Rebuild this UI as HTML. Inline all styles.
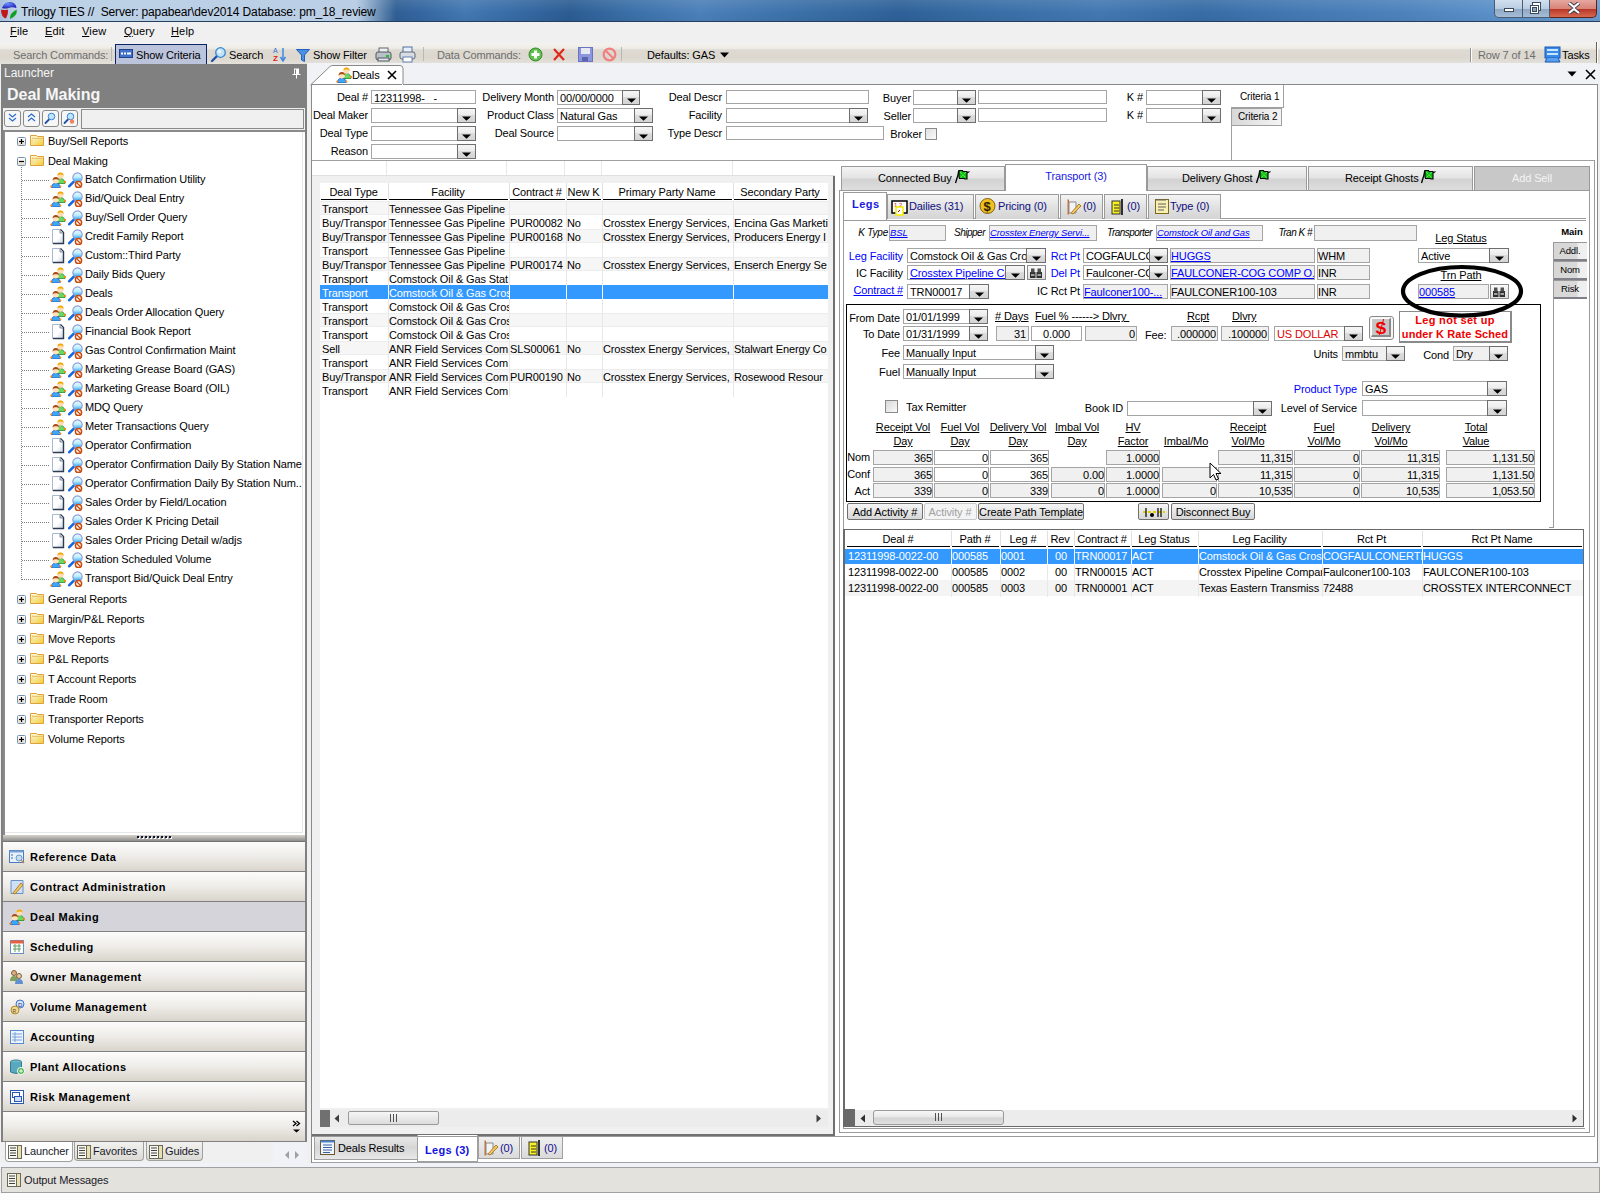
<!DOCTYPE html><html><head><meta charset="utf-8"><style>
html,body{margin:0;padding:0;}
body{width:1600px;height:1200px;overflow:hidden;position:relative;background:#f0f0f0;font-family:"Liberation Sans",sans-serif;font-size:11px;color:#000;}
body>div,body>svg{position:absolute;white-space:pre;}
</style></head><body>
<div style="left:0px;top:0px;width:1600px;height:21px;background:linear-gradient(90deg,#3a6ca2 0.00%,#2c5b8e 23.75%,#3466a0 26.25%,#4378b1 29.06%,#386ca6 31.88%,#2b5c93 35.62%,#3a6fa7 39.38%,#4b80b9 43.75%,#3c71a9 49.38%,#2e6198 56.25%,#396fa7 62.50%,#4278b1 68.75%,#376ca5 75.00%,#4379b3 81.25%,#4c82bb 87.50%,#5a90c8 93.12%,#6a9bd0 100.00%);"></div>
<div style="left:0px;top:0px;width:1600px;height:21px;background:linear-gradient(rgba(255,255,255,0.10),rgba(255,255,255,0.0) 60%,rgba(0,0,0,0.04));"></div>
<div style="left:0px;top:0px;width:396px;height:21px;background:linear-gradient(90deg,#a9c1dd 0%,#bdd1e7 4%,#bacee5 90%,rgba(186,206,229,0) 100%);"></div>
<div style="left:0px;top:21px;width:1600px;height:1px;background:#25405e;"></div>
<svg style="left:0px;top:1px;" width="18" height="19" viewBox="0 0 18 19"><defs><radialGradient id="lgb" cx="0.4" cy="0.3" r="0.7"><stop offset="0" stop-color="#6a8cff"/><stop offset="1" stop-color="#2020b0"/></radialGradient></defs>
<path d="M2 7 Q4 1 10 1 Q16 1.5 16.5 7 Q12 5.5 8.5 7 Q5 8 2 7Z" fill="url(#lgb)"/>
<path d="M1 8.5 Q5 9.5 8 8.5 Q8.5 13 6 17.5 Q1 16 1 8.5Z" fill="#c01818"/>
<path d="M16.8 8.5 Q17.5 15 10 18 Q9.5 12 16.8 8.5Z" fill="#10a020"/></svg>
<div style="top:3.84px;font-size:12px;line-height:16px;left:21px;color:#000;letter-spacing:-0.14px;">Trilogy TIES //  Server: papabear\dev2014 Database: pm_18_review</div>
<div style="left:1494px;top:0px;width:29px;height:18px;background:linear-gradient(#d2e0ee,#b9cde2 50%,#8fa8c4 55%,#a6bdd6);border:1px solid #4a5c72;border-top:none;border-radius:0 0 0 5px;box-sizing:border-box;"></div>
<div style="left:1523px;top:0px;width:27px;height:18px;background:linear-gradient(#d2e0ee,#b9cde2 50%,#8fa8c4 55%,#a6bdd6);border:1px solid #4a5c72;border-top:none;border-left:none;box-sizing:border-box;"></div>
<div style="left:1550px;top:0px;width:47px;height:18px;background:linear-gradient(#e6a8a0,#d88478 50%,#b83828 55%,#d86a50);border:1px solid #5a2418;border-top:none;border-left:none;border-radius:0 0 5px 0;box-sizing:border-box;"></div>
<div style="left:1504px;top:8px;width:10px;height:4px;background:#fff;border:1px solid #3a4a5a;box-sizing:border-box;"></div>
<svg style="left:1529px;top:1px;" width="13" height="14" viewBox="0 0 13 14"><rect x="3.5" y="1.5" width="8" height="8" fill="#fff" stroke="#3a4a5a"/><rect x="1.5" y="4.5" width="8" height="8" fill="#fff" stroke="#3a4a5a"/><rect x="3.5" y="6.5" width="4" height="4" fill="#8ea4bc" stroke="#3a4a5a"/></svg>
<svg style="left:1567px;top:2px;" width="14" height="12" viewBox="0 0 14 12"><path d="M2 1 L7 5 L12 1 M2 11 L7 7 L12 11" stroke="#3a3a4a" stroke-width="4" fill="none"/><path d="M2 1 L7 5 L12 1 M2 11 L7 7 L12 11" stroke="#fff" stroke-width="2.2" fill="none"/></svg>
<div style="left:0px;top:22px;width:1600px;height:21px;background:#f0f0f0;"></div>
<div style="left:10px;top:24.189999999999998px;font-size:11px;line-height:14px;letter-spacing:0.15px;"><u>F</u>ile</div>
<div style="left:45px;top:24.189999999999998px;font-size:11px;line-height:14px;letter-spacing:0.15px;"><u>E</u>dit</div>
<div style="left:82px;top:24.189999999999998px;font-size:11px;line-height:14px;letter-spacing:0.15px;"><u>V</u>iew</div>
<div style="left:124px;top:24.189999999999998px;font-size:11px;line-height:14px;letter-spacing:0.15px;"><u>Q</u>uery</div>
<div style="left:171px;top:24.189999999999998px;font-size:11px;line-height:14px;letter-spacing:0.15px;"><u>H</u>elp</div>
<div style="left:0px;top:43px;width:1600px;height:21px;background:linear-gradient(#f4f3ef 0%,#eeece7 25%,#dedad2 33%,#dcd8d0 70%,#e4e1db 100%);"></div>
<div style="top:48.19px;font-size:11px;line-height:14px;left:13px;color:#6d6d6d;letter-spacing:-0.12px;">Search Commands:</div>
<div style="left:111px;top:47px;width:1px;height:14px;background:#b8b8b8;"></div>
<div style="left:115px;top:44px;width:92px;height:20px;background:#bcc4dc;border:1px solid #0a246a;border-bottom:none;box-sizing:border-box;"></div>
<svg style="left:119px;top:49px;" width="14" height="9" viewBox="0 0 14 9"><rect x="0.5" y="0.5" width="13" height="8" fill="#4070c8" stroke="#204090"/><rect x="2" y="3.5" width="10" height="2" fill="#fff"/><rect x="4" y="3" width="1" height="3" fill="#4070c8"/><rect x="7" y="3" width="1" height="3" fill="#4070c8"/></svg>
<div style="top:48.19px;font-size:11px;line-height:14px;left:136px;letter-spacing:-0.12px;">Show Criteria</div>
<svg style="left:210px;top:46px;" width="17" height="17" viewBox="0 0 17 17"><line x1="2" y1="15" x2="7" y2="10" stroke="#2050a8" stroke-width="2.4" stroke-linecap="round"/><circle cx="10.5" cy="6.5" r="4.8" fill="#bfe3fb" stroke="#3a86d0" stroke-width="1.3"/><circle cx="9.5" cy="5.5" r="1.8" fill="#fff" opacity="0.7"/></svg>
<div style="top:48.19px;font-size:11px;line-height:14px;left:229px;letter-spacing:-0.12px;">Search</div>
<svg style="left:273px;top:46px;" width="13" height="16" viewBox="0 0 13 16"><text x="0" y="7" font-size="7" fill="#3070d0" font-family="Liberation Sans">A</text><text x="0" y="15" font-size="8" fill="#e02020" font-weight="bold" font-family="Liberation Sans">Z</text><line x1="10" y1="2" x2="10" y2="14" stroke="#3a8ae0" stroke-width="1.5"/><path d="M7.5 11 L10 15 L12.5 11" fill="none" stroke="#3a8ae0" stroke-width="1.5"/></svg>
<svg style="left:296px;top:49px;" width="14" height="13" viewBox="0 0 14 13"><path d="M0.5 0.5 H13.5 L8.5 6 V12.5 L5.5 11 V6 Z" fill="#4a90e0" stroke="#2060c0"/></svg>
<div style="top:48.19px;font-size:11px;line-height:14px;left:313px;letter-spacing:-0.12px;">Show Filter</div>
<svg style="left:375px;top:47px;" width="17" height="15" viewBox="0 0 17 15"><rect x="4" y="1" width="9" height="5" fill="#f0f0f0" stroke="#606870"/><rect x="1" y="5" width="15" height="8" rx="2" fill="#b8c0c8" stroke="#505860"/><rect x="3" y="11" width="11" height="3" fill="#e0e4e8" stroke="#505860"/><rect x="11" y="8" width="3" height="2" fill="#20c020"/></svg>
<svg style="left:399px;top:46px;" width="17" height="17" viewBox="0 0 17 17"><rect x="4" y="1" width="9" height="6" fill="#e8f0ff" stroke="#5070a0"/><rect x="1" y="6" width="15" height="7" rx="2" fill="#d8dce4" stroke="#606870"/><rect x="4" y="11" width="9" height="5" fill="#fff" stroke="#6080b0"/></svg>
<div style="left:423px;top:47px;width:1px;height:14px;background:#b8b8b8;"></div>
<div style="top:48.19px;font-size:11px;line-height:14px;left:437px;color:#6d6d6d;letter-spacing:-0.12px;">Data Commands:</div>
<svg style="left:528px;top:47px;" width="15" height="15" viewBox="0 0 15 15"><circle cx="7.5" cy="7.5" r="6.5" fill="#5cc04a" stroke="#3a8a30"/><rect x="6" y="3.5" width="3" height="8" fill="#fff"/><rect x="3.5" y="6" width="8" height="3" fill="#fff"/></svg>
<svg style="left:552px;top:47px;" width="14" height="15" viewBox="0 0 14 15"><path d="M2 2 L12 13 M12 2 L2 13" stroke="#e02818" stroke-width="2.2"/></svg>
<svg style="left:578px;top:47px;" width="15" height="15" viewBox="0 0 15 15"><rect x="0.5" y="0.5" width="14" height="14" fill="#8c96e0" stroke="#6a74c0"/><rect x="3" y="1" width="9" height="6" fill="#e8e8f0"/><rect x="4" y="10" width="6" height="4" fill="#5a64a8"/></svg>
<svg style="left:602px;top:47px;" width="15" height="15" viewBox="0 0 15 15"><circle cx="7.5" cy="7.5" r="5.8" fill="none" stroke="#f08080" stroke-width="2.2"/><line x1="3.5" y1="3.5" x2="11.5" y2="11.5" stroke="#f08080" stroke-width="2.2"/></svg>
<div style="left:621px;top:47px;width:1px;height:14px;background:#b8b8b8;"></div>
<div style="top:48.19px;font-size:11px;line-height:14px;left:647px;letter-spacing:-0.12px;">Defaults: GAS</div>
<svg style="left:720px;top:52px;" width="9" height="6" viewBox="0 0 9 6"><path d="M0 0.5 H9 L4.5 5.5 Z" fill="#000"/></svg>
<div style="left:1470px;top:48px;width:2px;height:14px;background:linear-gradient(90deg,#909090 50%,#fff 50%);"></div>
<div style="top:48.19px;font-size:11px;line-height:14px;left:1478px;color:#6d6d6d;letter-spacing:-0.12px;">Row 7 of 14</div>
<svg style="left:1544px;top:46px;" width="17" height="17" viewBox="0 0 17 17"><rect x="1" y="1" width="15" height="11" fill="#3a8ae8" stroke="#1a5ab8"/><rect x="3" y="3" width="11" height="2" fill="#c8e4ff"/><rect x="3" y="7" width="11" height="2" fill="#c8e4ff"/><path d="M3 12 L1 16 H16 L14 12" fill="#5aa0f0" stroke="#1a5ab8"/></svg>
<div style="top:48.19px;font-size:11px;line-height:14px;left:1562px;letter-spacing:-0.12px;">Tasks</div>
<div style="left:1596px;top:42px;width:2px;height:21px;background:linear-gradient(90deg,#606060 50%,#fff 50%);"></div>
<div style="left:1px;top:64px;width:306px;height:1078px;background:#808080;"></div>
<div style="top:64.84px;font-size:12px;line-height:16px;left:4px;color:#f4f4f4;">Launcher</div>
<svg style="left:292px;top:68px;" width="9" height="11" viewBox="0 0 9 11"><path d="M2 0.5 H7 V6 H8.5 V7 H5 V10.5 H4 V7 H0.5 V6 H2 Z" fill="#fff"/><rect x="3" y="1.5" width="1" height="4.5" fill="#808080"/></svg>
<div style="top:83.95px;font-size:16px;line-height:21px;left:7px;color:#f6f6f6;font-weight:bold;">Deal Making</div>
<div style="left:3px;top:108px;width:302px;height:22px;background:#f0f0f0;"></div>
<div style="left:4px;top:110px;width:17px;height:17px;background:#f6f6f6;border:1px solid #8a8a8a;border-radius:3px;box-sizing:border-box;"></div>
<svg style="left:8px;top:113px;" width="9" height="10" viewBox="0 0 9 10"><path d="M1 1 L4.5 4 L8 1 M1 5 L4.5 8 L8 5" stroke="#2a6ad0" stroke-width="1.2" fill="none"/></svg>
<div style="left:23px;top:110px;width:17px;height:17px;background:#f6f6f6;border:1px solid #8a8a8a;border-radius:3px;box-sizing:border-box;"></div>
<svg style="left:27px;top:113px;" width="9" height="10" viewBox="0 0 9 10"><path d="M1 8 L4.5 5 L8 8 M1 4 L4.5 1 L8 4" stroke="#2a6ad0" stroke-width="1.2" fill="none"/></svg>
<div style="left:42px;top:110px;width:17px;height:17px;background:#f6f6f6;border:1px solid #8a8a8a;border-radius:3px;box-sizing:border-box;"></div>
<svg style="left:44px;top:112px;" width="12" height="13" viewBox="0 0 12 13"><line x1="1.5" y1="11" x2="5" y2="7.5" stroke="#2050a8" stroke-width="1.8" stroke-linecap="round"/><circle cx="7.5" cy="4.5" r="3.3" fill="#bfe3fb" stroke="#3a86d0"/></svg>
<div style="left:61px;top:110px;width:17px;height:17px;background:#f6f6f6;border:1px solid #8a8a8a;border-radius:3px;box-sizing:border-box;"></div>
<svg style="left:63px;top:112px;" width="12" height="13" viewBox="0 0 12 13"><line x1="1.5" y1="11" x2="5" y2="7.5" stroke="#2050a8" stroke-width="1.8" stroke-linecap="round"/><circle cx="7.5" cy="4.5" r="3.3" fill="#bfe3fb" stroke="#3a86d0"/><circle cx="9" cy="9.5" r="2.2" fill="#f08060"/></svg>
<div style="left:81px;top:109px;width:223px;height:20px;background:#f0f0f0;border:1px solid #8a8a8a;border-left-width:1px;box-sizing:border-box;"></div>
<div style="left:3px;top:130px;width:302px;height:705px;background:#fff;border:2px solid #8a8a8a;border-right:none;border-bottom:none;box-sizing:border-box;"></div>
<div style="left:302px;top:132px;width:1px;height:701px;background:#e6e6e6;"></div>
<div style="left:5px;top:832px;width:298px;height:1px;background:#e6e6e6;"></div>
<svg style="left:17px;top:137px;" width="9" height="9" viewBox="0 0 9 9"><defs><linearGradient id="eg" x1="0" y1="0" x2="0" y2="1"><stop offset="0" stop-color="#ffffff"/><stop offset="1" stop-color="#e4dcc8"/></linearGradient></defs><rect x="0.5" y="0.5" width="8" height="8" rx="1" fill="url(#eg)" stroke="#7890b0"/><line x1="2" y1="4.5" x2="7" y2="4.5" stroke="#000" stroke-width="1.2"/><line x1="4.5" y1="2" x2="4.5" y2="7" stroke="#000" stroke-width="1.2"/></svg>
<svg style="left:30px;top:135px;" width="16" height="13" viewBox="0 0 16 13">
<defs><linearGradient id="fg" x1="0" y1="0" x2="1" y2="1"><stop offset="0" stop-color="#fffbe8"/><stop offset="1" stop-color="#f0cc30"/></linearGradient></defs>
<path d="M0.5 0.5 H6.5 L7.5 1.5 H13.5 V10.5 H0.5 Z" fill="url(#fg)" stroke="#e0a040" stroke-width="1"/>
<path d="M2 3.5 H12.5" stroke="#e8c070" stroke-width="0.9"/>
<path d="M2 3 L3 2 M2 4.5 V8" stroke="#f0d080" stroke-width="0.8"/>
</svg>
<div style="top:134.19px;font-size:11px;line-height:14px;left:48px;letter-spacing:-0.12px;">Buy/Sell Reports</div>
<svg style="left:17px;top:157px;" width="9" height="9" viewBox="0 0 9 9"><defs><linearGradient id="eg" x1="0" y1="0" x2="0" y2="1"><stop offset="0" stop-color="#ffffff"/><stop offset="1" stop-color="#e4dcc8"/></linearGradient></defs><rect x="0.5" y="0.5" width="8" height="8" rx="1" fill="url(#eg)" stroke="#7890b0"/><line x1="2" y1="4.5" x2="7" y2="4.5" stroke="#000" stroke-width="1.2"/></svg>
<svg style="left:30px;top:155px;" width="16" height="13" viewBox="0 0 16 13">
<defs><linearGradient id="fg" x1="0" y1="0" x2="1" y2="1"><stop offset="0" stop-color="#fffbe8"/><stop offset="1" stop-color="#f0cc30"/></linearGradient></defs>
<path d="M0.5 0.5 H6.5 L7.5 1.5 H13.5 V10.5 H0.5 Z" fill="url(#fg)" stroke="#e0a040" stroke-width="1"/>
<path d="M2 3.5 H12.5" stroke="#e8c070" stroke-width="0.9"/>
<path d="M2 3 L3 2 M2 4.5 V8" stroke="#f0d080" stroke-width="0.8"/>
</svg>
<div style="top:154.19px;font-size:11px;line-height:14px;left:48px;letter-spacing:-0.12px;">Deal Making</div>
<div style="left:21px;top:167px;width:1px;height:413px;background:repeating-linear-gradient(#808080 0 1px,transparent 1px 2px);"></div>
<div style="left:22px;top:180px;width:28px;height:1px;background:repeating-linear-gradient(90deg,#808080 0 1px,transparent 1px 2px);"></div>
<svg style="left:50px;top:172px;" width="16" height="16" viewBox="0 0 16 16">
<path d="M7 11.5 Q7 6.5 10.5 6.5 Q14.5 6.5 15 11.5 Z" fill="#6ad860" stroke="#2a8a2a" stroke-width="0.8"/>
<circle cx="15.2" cy="9.8" r="1.1" fill="#ff8a20"/>
<circle cx="10.5" cy="3.6" r="3.1" fill="#ffdcb4"/>
<path d="M7.4 3.8 Q7.4 0.4 10.5 0.4 Q13.6 0.4 13.6 3.8 Q12 2.2 10.5 2.6 Q9 2.2 7.4 3.8Z" fill="#f2a800"/>
<path d="M1.5 16 Q1.5 11.2 5.8 11.2 Q10.2 11.2 10.2 16 Z" fill="#3aa8f8" stroke="#1a50c0" stroke-width="0.8"/>
<circle cx="1.2" cy="14.6" r="1.1" fill="#ff8a20"/><circle cx="10.3" cy="14.6" r="1.1" fill="#ff8a20"/>
<circle cx="5.8" cy="8.3" r="3.2" fill="#ffe2bc"/>
<path d="M2.6 8.6 Q2.6 5 5.8 5 Q9 5 9 8.6 Q7.5 6.8 5.8 7.3 Q4 6.8 2.6 8.6Z" fill="#a64a18"/>
</svg>
<svg style="left:67px;top:171px;" width="17" height="17" viewBox="0 0 17 17">
<defs><linearGradient id="lg" x1="0" y1="0" x2="0" y2="1"><stop offset="0" stop-color="#e8fbff"/><stop offset="0.45" stop-color="#bfefff"/><stop offset="1" stop-color="#1a98f8"/></linearGradient></defs>
<line x1="2.3" y1="15.2" x2="6.8" y2="10.6" stroke="#1468e0" stroke-width="2.6" stroke-linecap="round"/>
<circle cx="10.5" cy="6.6" r="4.7" fill="url(#lg)" stroke="#8c9ad8" stroke-width="1.1"/>
<circle cx="11.5" cy="13.5" r="3.1" fill="#fff" stroke="#c84a0a" stroke-width="1.5"/>
<line x1="9.5" y1="11.5" x2="13.5" y2="15.5" stroke="#c84a0a" stroke-width="1.2"/>
</svg>
<div style="top:172.19px;font-size:11px;line-height:14px;left:85px;letter-spacing:-0.12px;width:217px;overflow:hidden;">Batch Confirmation Utility</div>
<div style="left:22px;top:199px;width:28px;height:1px;background:repeating-linear-gradient(90deg,#808080 0 1px,transparent 1px 2px);"></div>
<svg style="left:50px;top:191px;" width="16" height="16" viewBox="0 0 16 16">
<path d="M7 11.5 Q7 6.5 10.5 6.5 Q14.5 6.5 15 11.5 Z" fill="#6ad860" stroke="#2a8a2a" stroke-width="0.8"/>
<circle cx="15.2" cy="9.8" r="1.1" fill="#ff8a20"/>
<circle cx="10.5" cy="3.6" r="3.1" fill="#ffdcb4"/>
<path d="M7.4 3.8 Q7.4 0.4 10.5 0.4 Q13.6 0.4 13.6 3.8 Q12 2.2 10.5 2.6 Q9 2.2 7.4 3.8Z" fill="#f2a800"/>
<path d="M1.5 16 Q1.5 11.2 5.8 11.2 Q10.2 11.2 10.2 16 Z" fill="#3aa8f8" stroke="#1a50c0" stroke-width="0.8"/>
<circle cx="1.2" cy="14.6" r="1.1" fill="#ff8a20"/><circle cx="10.3" cy="14.6" r="1.1" fill="#ff8a20"/>
<circle cx="5.8" cy="8.3" r="3.2" fill="#ffe2bc"/>
<path d="M2.6 8.6 Q2.6 5 5.8 5 Q9 5 9 8.6 Q7.5 6.8 5.8 7.3 Q4 6.8 2.6 8.6Z" fill="#a64a18"/>
</svg>
<svg style="left:67px;top:190px;" width="17" height="17" viewBox="0 0 17 17">
<defs><linearGradient id="lg" x1="0" y1="0" x2="0" y2="1"><stop offset="0" stop-color="#e8fbff"/><stop offset="0.45" stop-color="#bfefff"/><stop offset="1" stop-color="#1a98f8"/></linearGradient></defs>
<line x1="2.3" y1="15.2" x2="6.8" y2="10.6" stroke="#1468e0" stroke-width="2.6" stroke-linecap="round"/>
<circle cx="10.5" cy="6.6" r="4.7" fill="url(#lg)" stroke="#8c9ad8" stroke-width="1.1"/>
<circle cx="11.5" cy="13.5" r="3.1" fill="#fff" stroke="#c84a0a" stroke-width="1.5"/>
<line x1="9.5" y1="11.5" x2="13.5" y2="15.5" stroke="#c84a0a" stroke-width="1.2"/>
</svg>
<div style="top:191.19px;font-size:11px;line-height:14px;left:85px;letter-spacing:-0.12px;width:217px;overflow:hidden;">Bid/Quick Deal Entry</div>
<div style="left:22px;top:218px;width:28px;height:1px;background:repeating-linear-gradient(90deg,#808080 0 1px,transparent 1px 2px);"></div>
<svg style="left:50px;top:210px;" width="16" height="16" viewBox="0 0 16 16">
<path d="M7 11.5 Q7 6.5 10.5 6.5 Q14.5 6.5 15 11.5 Z" fill="#6ad860" stroke="#2a8a2a" stroke-width="0.8"/>
<circle cx="15.2" cy="9.8" r="1.1" fill="#ff8a20"/>
<circle cx="10.5" cy="3.6" r="3.1" fill="#ffdcb4"/>
<path d="M7.4 3.8 Q7.4 0.4 10.5 0.4 Q13.6 0.4 13.6 3.8 Q12 2.2 10.5 2.6 Q9 2.2 7.4 3.8Z" fill="#f2a800"/>
<path d="M1.5 16 Q1.5 11.2 5.8 11.2 Q10.2 11.2 10.2 16 Z" fill="#3aa8f8" stroke="#1a50c0" stroke-width="0.8"/>
<circle cx="1.2" cy="14.6" r="1.1" fill="#ff8a20"/><circle cx="10.3" cy="14.6" r="1.1" fill="#ff8a20"/>
<circle cx="5.8" cy="8.3" r="3.2" fill="#ffe2bc"/>
<path d="M2.6 8.6 Q2.6 5 5.8 5 Q9 5 9 8.6 Q7.5 6.8 5.8 7.3 Q4 6.8 2.6 8.6Z" fill="#a64a18"/>
</svg>
<svg style="left:67px;top:209px;" width="17" height="17" viewBox="0 0 17 17">
<defs><linearGradient id="lg" x1="0" y1="0" x2="0" y2="1"><stop offset="0" stop-color="#e8fbff"/><stop offset="0.45" stop-color="#bfefff"/><stop offset="1" stop-color="#1a98f8"/></linearGradient></defs>
<line x1="2.3" y1="15.2" x2="6.8" y2="10.6" stroke="#1468e0" stroke-width="2.6" stroke-linecap="round"/>
<circle cx="10.5" cy="6.6" r="4.7" fill="url(#lg)" stroke="#8c9ad8" stroke-width="1.1"/>
<circle cx="11.5" cy="13.5" r="3.1" fill="#fff" stroke="#c84a0a" stroke-width="1.5"/>
<line x1="9.5" y1="11.5" x2="13.5" y2="15.5" stroke="#c84a0a" stroke-width="1.2"/>
</svg>
<div style="top:210.19px;font-size:11px;line-height:14px;left:85px;letter-spacing:-0.12px;width:217px;overflow:hidden;">Buy/Sell Order Query</div>
<div style="left:22px;top:237px;width:28px;height:1px;background:repeating-linear-gradient(90deg,#808080 0 1px,transparent 1px 2px);"></div>
<svg style="left:52px;top:229px;" width="13" height="16" viewBox="0 0 13 16">
<defs><linearGradient id="dg" x1="0" y1="0" x2="1" y2="1"><stop offset="0.55" stop-color="#ffffff"/><stop offset="1" stop-color="#c8d0e0"/></linearGradient></defs>
<path d="M0.5 0.5 H8.5 L11.5 3.5 V14.5 H0.5 Z" fill="url(#dg)" stroke="#a8b8d0" stroke-width="1"/>
<path d="M8.5 0.5 L11.5 3.5 V14.5 H1" fill="none" stroke="#2c3c54" stroke-width="1.4"/>
<path d="M8 1 V4 H11" fill="#e0e8f0" stroke="#5a6a80" stroke-width="0.8"/>
</svg>
<svg style="left:67px;top:228px;" width="17" height="17" viewBox="0 0 17 17">
<defs><linearGradient id="lg" x1="0" y1="0" x2="0" y2="1"><stop offset="0" stop-color="#e8fbff"/><stop offset="0.45" stop-color="#bfefff"/><stop offset="1" stop-color="#1a98f8"/></linearGradient></defs>
<line x1="2.3" y1="15.2" x2="6.8" y2="10.6" stroke="#1468e0" stroke-width="2.6" stroke-linecap="round"/>
<circle cx="10.5" cy="6.6" r="4.7" fill="url(#lg)" stroke="#8c9ad8" stroke-width="1.1"/>
<circle cx="11.5" cy="13.5" r="3.1" fill="#fff" stroke="#c84a0a" stroke-width="1.5"/>
<line x1="9.5" y1="11.5" x2="13.5" y2="15.5" stroke="#c84a0a" stroke-width="1.2"/>
</svg>
<div style="top:229.19px;font-size:11px;line-height:14px;left:85px;letter-spacing:-0.12px;width:217px;overflow:hidden;">Credit Family Report</div>
<div style="left:22px;top:256px;width:28px;height:1px;background:repeating-linear-gradient(90deg,#808080 0 1px,transparent 1px 2px);"></div>
<svg style="left:52px;top:248px;" width="13" height="16" viewBox="0 0 13 16">
<defs><linearGradient id="dg" x1="0" y1="0" x2="1" y2="1"><stop offset="0.55" stop-color="#ffffff"/><stop offset="1" stop-color="#c8d0e0"/></linearGradient></defs>
<path d="M0.5 0.5 H8.5 L11.5 3.5 V14.5 H0.5 Z" fill="url(#dg)" stroke="#a8b8d0" stroke-width="1"/>
<path d="M8.5 0.5 L11.5 3.5 V14.5 H1" fill="none" stroke="#2c3c54" stroke-width="1.4"/>
<path d="M8 1 V4 H11" fill="#e0e8f0" stroke="#5a6a80" stroke-width="0.8"/>
</svg>
<svg style="left:67px;top:247px;" width="17" height="17" viewBox="0 0 17 17">
<defs><linearGradient id="lg" x1="0" y1="0" x2="0" y2="1"><stop offset="0" stop-color="#e8fbff"/><stop offset="0.45" stop-color="#bfefff"/><stop offset="1" stop-color="#1a98f8"/></linearGradient></defs>
<line x1="2.3" y1="15.2" x2="6.8" y2="10.6" stroke="#1468e0" stroke-width="2.6" stroke-linecap="round"/>
<circle cx="10.5" cy="6.6" r="4.7" fill="url(#lg)" stroke="#8c9ad8" stroke-width="1.1"/>
<circle cx="11.5" cy="13.5" r="3.1" fill="#fff" stroke="#c84a0a" stroke-width="1.5"/>
<line x1="9.5" y1="11.5" x2="13.5" y2="15.5" stroke="#c84a0a" stroke-width="1.2"/>
</svg>
<div style="top:248.19px;font-size:11px;line-height:14px;left:85px;letter-spacing:-0.12px;width:217px;overflow:hidden;">Custom::Third Party</div>
<div style="left:22px;top:275px;width:28px;height:1px;background:repeating-linear-gradient(90deg,#808080 0 1px,transparent 1px 2px);"></div>
<svg style="left:50px;top:267px;" width="16" height="16" viewBox="0 0 16 16">
<path d="M7 11.5 Q7 6.5 10.5 6.5 Q14.5 6.5 15 11.5 Z" fill="#6ad860" stroke="#2a8a2a" stroke-width="0.8"/>
<circle cx="15.2" cy="9.8" r="1.1" fill="#ff8a20"/>
<circle cx="10.5" cy="3.6" r="3.1" fill="#ffdcb4"/>
<path d="M7.4 3.8 Q7.4 0.4 10.5 0.4 Q13.6 0.4 13.6 3.8 Q12 2.2 10.5 2.6 Q9 2.2 7.4 3.8Z" fill="#f2a800"/>
<path d="M1.5 16 Q1.5 11.2 5.8 11.2 Q10.2 11.2 10.2 16 Z" fill="#3aa8f8" stroke="#1a50c0" stroke-width="0.8"/>
<circle cx="1.2" cy="14.6" r="1.1" fill="#ff8a20"/><circle cx="10.3" cy="14.6" r="1.1" fill="#ff8a20"/>
<circle cx="5.8" cy="8.3" r="3.2" fill="#ffe2bc"/>
<path d="M2.6 8.6 Q2.6 5 5.8 5 Q9 5 9 8.6 Q7.5 6.8 5.8 7.3 Q4 6.8 2.6 8.6Z" fill="#a64a18"/>
</svg>
<svg style="left:67px;top:266px;" width="17" height="17" viewBox="0 0 17 17">
<defs><linearGradient id="lg" x1="0" y1="0" x2="0" y2="1"><stop offset="0" stop-color="#e8fbff"/><stop offset="0.45" stop-color="#bfefff"/><stop offset="1" stop-color="#1a98f8"/></linearGradient></defs>
<line x1="2.3" y1="15.2" x2="6.8" y2="10.6" stroke="#1468e0" stroke-width="2.6" stroke-linecap="round"/>
<circle cx="10.5" cy="6.6" r="4.7" fill="url(#lg)" stroke="#8c9ad8" stroke-width="1.1"/>
<circle cx="11.5" cy="13.5" r="3.1" fill="#fff" stroke="#c84a0a" stroke-width="1.5"/>
<line x1="9.5" y1="11.5" x2="13.5" y2="15.5" stroke="#c84a0a" stroke-width="1.2"/>
</svg>
<div style="top:267.19px;font-size:11px;line-height:14px;left:85px;letter-spacing:-0.12px;width:217px;overflow:hidden;">Daily Bids Query</div>
<div style="left:22px;top:294px;width:28px;height:1px;background:repeating-linear-gradient(90deg,#808080 0 1px,transparent 1px 2px);"></div>
<svg style="left:50px;top:286px;" width="16" height="16" viewBox="0 0 16 16">
<path d="M7 11.5 Q7 6.5 10.5 6.5 Q14.5 6.5 15 11.5 Z" fill="#6ad860" stroke="#2a8a2a" stroke-width="0.8"/>
<circle cx="15.2" cy="9.8" r="1.1" fill="#ff8a20"/>
<circle cx="10.5" cy="3.6" r="3.1" fill="#ffdcb4"/>
<path d="M7.4 3.8 Q7.4 0.4 10.5 0.4 Q13.6 0.4 13.6 3.8 Q12 2.2 10.5 2.6 Q9 2.2 7.4 3.8Z" fill="#f2a800"/>
<path d="M1.5 16 Q1.5 11.2 5.8 11.2 Q10.2 11.2 10.2 16 Z" fill="#3aa8f8" stroke="#1a50c0" stroke-width="0.8"/>
<circle cx="1.2" cy="14.6" r="1.1" fill="#ff8a20"/><circle cx="10.3" cy="14.6" r="1.1" fill="#ff8a20"/>
<circle cx="5.8" cy="8.3" r="3.2" fill="#ffe2bc"/>
<path d="M2.6 8.6 Q2.6 5 5.8 5 Q9 5 9 8.6 Q7.5 6.8 5.8 7.3 Q4 6.8 2.6 8.6Z" fill="#a64a18"/>
</svg>
<svg style="left:67px;top:285px;" width="17" height="17" viewBox="0 0 17 17">
<defs><linearGradient id="lg" x1="0" y1="0" x2="0" y2="1"><stop offset="0" stop-color="#e8fbff"/><stop offset="0.45" stop-color="#bfefff"/><stop offset="1" stop-color="#1a98f8"/></linearGradient></defs>
<line x1="2.3" y1="15.2" x2="6.8" y2="10.6" stroke="#1468e0" stroke-width="2.6" stroke-linecap="round"/>
<circle cx="10.5" cy="6.6" r="4.7" fill="url(#lg)" stroke="#8c9ad8" stroke-width="1.1"/>
<circle cx="11.5" cy="13.5" r="3.1" fill="#fff" stroke="#c84a0a" stroke-width="1.5"/>
<line x1="9.5" y1="11.5" x2="13.5" y2="15.5" stroke="#c84a0a" stroke-width="1.2"/>
</svg>
<div style="top:286.19px;font-size:11px;line-height:14px;left:85px;letter-spacing:-0.12px;width:217px;overflow:hidden;">Deals</div>
<div style="left:22px;top:313px;width:28px;height:1px;background:repeating-linear-gradient(90deg,#808080 0 1px,transparent 1px 2px);"></div>
<svg style="left:50px;top:305px;" width="16" height="16" viewBox="0 0 16 16">
<path d="M7 11.5 Q7 6.5 10.5 6.5 Q14.5 6.5 15 11.5 Z" fill="#6ad860" stroke="#2a8a2a" stroke-width="0.8"/>
<circle cx="15.2" cy="9.8" r="1.1" fill="#ff8a20"/>
<circle cx="10.5" cy="3.6" r="3.1" fill="#ffdcb4"/>
<path d="M7.4 3.8 Q7.4 0.4 10.5 0.4 Q13.6 0.4 13.6 3.8 Q12 2.2 10.5 2.6 Q9 2.2 7.4 3.8Z" fill="#f2a800"/>
<path d="M1.5 16 Q1.5 11.2 5.8 11.2 Q10.2 11.2 10.2 16 Z" fill="#3aa8f8" stroke="#1a50c0" stroke-width="0.8"/>
<circle cx="1.2" cy="14.6" r="1.1" fill="#ff8a20"/><circle cx="10.3" cy="14.6" r="1.1" fill="#ff8a20"/>
<circle cx="5.8" cy="8.3" r="3.2" fill="#ffe2bc"/>
<path d="M2.6 8.6 Q2.6 5 5.8 5 Q9 5 9 8.6 Q7.5 6.8 5.8 7.3 Q4 6.8 2.6 8.6Z" fill="#a64a18"/>
</svg>
<svg style="left:67px;top:304px;" width="17" height="17" viewBox="0 0 17 17">
<defs><linearGradient id="lg" x1="0" y1="0" x2="0" y2="1"><stop offset="0" stop-color="#e8fbff"/><stop offset="0.45" stop-color="#bfefff"/><stop offset="1" stop-color="#1a98f8"/></linearGradient></defs>
<line x1="2.3" y1="15.2" x2="6.8" y2="10.6" stroke="#1468e0" stroke-width="2.6" stroke-linecap="round"/>
<circle cx="10.5" cy="6.6" r="4.7" fill="url(#lg)" stroke="#8c9ad8" stroke-width="1.1"/>
<circle cx="11.5" cy="13.5" r="3.1" fill="#fff" stroke="#c84a0a" stroke-width="1.5"/>
<line x1="9.5" y1="11.5" x2="13.5" y2="15.5" stroke="#c84a0a" stroke-width="1.2"/>
</svg>
<div style="top:305.19px;font-size:11px;line-height:14px;left:85px;letter-spacing:-0.12px;width:217px;overflow:hidden;">Deals Order Allocation Query</div>
<div style="left:22px;top:332px;width:28px;height:1px;background:repeating-linear-gradient(90deg,#808080 0 1px,transparent 1px 2px);"></div>
<svg style="left:52px;top:324px;" width="13" height="16" viewBox="0 0 13 16">
<defs><linearGradient id="dg" x1="0" y1="0" x2="1" y2="1"><stop offset="0.55" stop-color="#ffffff"/><stop offset="1" stop-color="#c8d0e0"/></linearGradient></defs>
<path d="M0.5 0.5 H8.5 L11.5 3.5 V14.5 H0.5 Z" fill="url(#dg)" stroke="#a8b8d0" stroke-width="1"/>
<path d="M8.5 0.5 L11.5 3.5 V14.5 H1" fill="none" stroke="#2c3c54" stroke-width="1.4"/>
<path d="M8 1 V4 H11" fill="#e0e8f0" stroke="#5a6a80" stroke-width="0.8"/>
</svg>
<svg style="left:67px;top:323px;" width="17" height="17" viewBox="0 0 17 17">
<defs><linearGradient id="lg" x1="0" y1="0" x2="0" y2="1"><stop offset="0" stop-color="#e8fbff"/><stop offset="0.45" stop-color="#bfefff"/><stop offset="1" stop-color="#1a98f8"/></linearGradient></defs>
<line x1="2.3" y1="15.2" x2="6.8" y2="10.6" stroke="#1468e0" stroke-width="2.6" stroke-linecap="round"/>
<circle cx="10.5" cy="6.6" r="4.7" fill="url(#lg)" stroke="#8c9ad8" stroke-width="1.1"/>
<circle cx="11.5" cy="13.5" r="3.1" fill="#fff" stroke="#c84a0a" stroke-width="1.5"/>
<line x1="9.5" y1="11.5" x2="13.5" y2="15.5" stroke="#c84a0a" stroke-width="1.2"/>
</svg>
<div style="top:324.19px;font-size:11px;line-height:14px;left:85px;letter-spacing:-0.12px;width:217px;overflow:hidden;">Financial Book Report</div>
<div style="left:22px;top:351px;width:28px;height:1px;background:repeating-linear-gradient(90deg,#808080 0 1px,transparent 1px 2px);"></div>
<svg style="left:50px;top:343px;" width="16" height="16" viewBox="0 0 16 16">
<path d="M7 11.5 Q7 6.5 10.5 6.5 Q14.5 6.5 15 11.5 Z" fill="#6ad860" stroke="#2a8a2a" stroke-width="0.8"/>
<circle cx="15.2" cy="9.8" r="1.1" fill="#ff8a20"/>
<circle cx="10.5" cy="3.6" r="3.1" fill="#ffdcb4"/>
<path d="M7.4 3.8 Q7.4 0.4 10.5 0.4 Q13.6 0.4 13.6 3.8 Q12 2.2 10.5 2.6 Q9 2.2 7.4 3.8Z" fill="#f2a800"/>
<path d="M1.5 16 Q1.5 11.2 5.8 11.2 Q10.2 11.2 10.2 16 Z" fill="#3aa8f8" stroke="#1a50c0" stroke-width="0.8"/>
<circle cx="1.2" cy="14.6" r="1.1" fill="#ff8a20"/><circle cx="10.3" cy="14.6" r="1.1" fill="#ff8a20"/>
<circle cx="5.8" cy="8.3" r="3.2" fill="#ffe2bc"/>
<path d="M2.6 8.6 Q2.6 5 5.8 5 Q9 5 9 8.6 Q7.5 6.8 5.8 7.3 Q4 6.8 2.6 8.6Z" fill="#a64a18"/>
</svg>
<svg style="left:67px;top:342px;" width="17" height="17" viewBox="0 0 17 17">
<defs><linearGradient id="lg" x1="0" y1="0" x2="0" y2="1"><stop offset="0" stop-color="#e8fbff"/><stop offset="0.45" stop-color="#bfefff"/><stop offset="1" stop-color="#1a98f8"/></linearGradient></defs>
<line x1="2.3" y1="15.2" x2="6.8" y2="10.6" stroke="#1468e0" stroke-width="2.6" stroke-linecap="round"/>
<circle cx="10.5" cy="6.6" r="4.7" fill="url(#lg)" stroke="#8c9ad8" stroke-width="1.1"/>
<circle cx="11.5" cy="13.5" r="3.1" fill="#fff" stroke="#c84a0a" stroke-width="1.5"/>
<line x1="9.5" y1="11.5" x2="13.5" y2="15.5" stroke="#c84a0a" stroke-width="1.2"/>
</svg>
<div style="top:343.19px;font-size:11px;line-height:14px;left:85px;letter-spacing:-0.12px;width:217px;overflow:hidden;">Gas Control Confirmation Maint</div>
<div style="left:22px;top:370px;width:28px;height:1px;background:repeating-linear-gradient(90deg,#808080 0 1px,transparent 1px 2px);"></div>
<svg style="left:50px;top:362px;" width="16" height="16" viewBox="0 0 16 16">
<path d="M7 11.5 Q7 6.5 10.5 6.5 Q14.5 6.5 15 11.5 Z" fill="#6ad860" stroke="#2a8a2a" stroke-width="0.8"/>
<circle cx="15.2" cy="9.8" r="1.1" fill="#ff8a20"/>
<circle cx="10.5" cy="3.6" r="3.1" fill="#ffdcb4"/>
<path d="M7.4 3.8 Q7.4 0.4 10.5 0.4 Q13.6 0.4 13.6 3.8 Q12 2.2 10.5 2.6 Q9 2.2 7.4 3.8Z" fill="#f2a800"/>
<path d="M1.5 16 Q1.5 11.2 5.8 11.2 Q10.2 11.2 10.2 16 Z" fill="#3aa8f8" stroke="#1a50c0" stroke-width="0.8"/>
<circle cx="1.2" cy="14.6" r="1.1" fill="#ff8a20"/><circle cx="10.3" cy="14.6" r="1.1" fill="#ff8a20"/>
<circle cx="5.8" cy="8.3" r="3.2" fill="#ffe2bc"/>
<path d="M2.6 8.6 Q2.6 5 5.8 5 Q9 5 9 8.6 Q7.5 6.8 5.8 7.3 Q4 6.8 2.6 8.6Z" fill="#a64a18"/>
</svg>
<svg style="left:67px;top:361px;" width="17" height="17" viewBox="0 0 17 17">
<defs><linearGradient id="lg" x1="0" y1="0" x2="0" y2="1"><stop offset="0" stop-color="#e8fbff"/><stop offset="0.45" stop-color="#bfefff"/><stop offset="1" stop-color="#1a98f8"/></linearGradient></defs>
<line x1="2.3" y1="15.2" x2="6.8" y2="10.6" stroke="#1468e0" stroke-width="2.6" stroke-linecap="round"/>
<circle cx="10.5" cy="6.6" r="4.7" fill="url(#lg)" stroke="#8c9ad8" stroke-width="1.1"/>
<circle cx="11.5" cy="13.5" r="3.1" fill="#fff" stroke="#c84a0a" stroke-width="1.5"/>
<line x1="9.5" y1="11.5" x2="13.5" y2="15.5" stroke="#c84a0a" stroke-width="1.2"/>
</svg>
<div style="top:362.19px;font-size:11px;line-height:14px;left:85px;letter-spacing:-0.12px;width:217px;overflow:hidden;">Marketing Grease Board (GAS)</div>
<div style="left:22px;top:389px;width:28px;height:1px;background:repeating-linear-gradient(90deg,#808080 0 1px,transparent 1px 2px);"></div>
<svg style="left:50px;top:381px;" width="16" height="16" viewBox="0 0 16 16">
<path d="M7 11.5 Q7 6.5 10.5 6.5 Q14.5 6.5 15 11.5 Z" fill="#6ad860" stroke="#2a8a2a" stroke-width="0.8"/>
<circle cx="15.2" cy="9.8" r="1.1" fill="#ff8a20"/>
<circle cx="10.5" cy="3.6" r="3.1" fill="#ffdcb4"/>
<path d="M7.4 3.8 Q7.4 0.4 10.5 0.4 Q13.6 0.4 13.6 3.8 Q12 2.2 10.5 2.6 Q9 2.2 7.4 3.8Z" fill="#f2a800"/>
<path d="M1.5 16 Q1.5 11.2 5.8 11.2 Q10.2 11.2 10.2 16 Z" fill="#3aa8f8" stroke="#1a50c0" stroke-width="0.8"/>
<circle cx="1.2" cy="14.6" r="1.1" fill="#ff8a20"/><circle cx="10.3" cy="14.6" r="1.1" fill="#ff8a20"/>
<circle cx="5.8" cy="8.3" r="3.2" fill="#ffe2bc"/>
<path d="M2.6 8.6 Q2.6 5 5.8 5 Q9 5 9 8.6 Q7.5 6.8 5.8 7.3 Q4 6.8 2.6 8.6Z" fill="#a64a18"/>
</svg>
<svg style="left:67px;top:380px;" width="17" height="17" viewBox="0 0 17 17">
<defs><linearGradient id="lg" x1="0" y1="0" x2="0" y2="1"><stop offset="0" stop-color="#e8fbff"/><stop offset="0.45" stop-color="#bfefff"/><stop offset="1" stop-color="#1a98f8"/></linearGradient></defs>
<line x1="2.3" y1="15.2" x2="6.8" y2="10.6" stroke="#1468e0" stroke-width="2.6" stroke-linecap="round"/>
<circle cx="10.5" cy="6.6" r="4.7" fill="url(#lg)" stroke="#8c9ad8" stroke-width="1.1"/>
<circle cx="11.5" cy="13.5" r="3.1" fill="#fff" stroke="#c84a0a" stroke-width="1.5"/>
<line x1="9.5" y1="11.5" x2="13.5" y2="15.5" stroke="#c84a0a" stroke-width="1.2"/>
</svg>
<div style="top:381.19px;font-size:11px;line-height:14px;left:85px;letter-spacing:-0.12px;width:217px;overflow:hidden;">Marketing Grease Board (OIL)</div>
<div style="left:22px;top:408px;width:28px;height:1px;background:repeating-linear-gradient(90deg,#808080 0 1px,transparent 1px 2px);"></div>
<svg style="left:50px;top:400px;" width="16" height="16" viewBox="0 0 16 16">
<path d="M7 11.5 Q7 6.5 10.5 6.5 Q14.5 6.5 15 11.5 Z" fill="#6ad860" stroke="#2a8a2a" stroke-width="0.8"/>
<circle cx="15.2" cy="9.8" r="1.1" fill="#ff8a20"/>
<circle cx="10.5" cy="3.6" r="3.1" fill="#ffdcb4"/>
<path d="M7.4 3.8 Q7.4 0.4 10.5 0.4 Q13.6 0.4 13.6 3.8 Q12 2.2 10.5 2.6 Q9 2.2 7.4 3.8Z" fill="#f2a800"/>
<path d="M1.5 16 Q1.5 11.2 5.8 11.2 Q10.2 11.2 10.2 16 Z" fill="#3aa8f8" stroke="#1a50c0" stroke-width="0.8"/>
<circle cx="1.2" cy="14.6" r="1.1" fill="#ff8a20"/><circle cx="10.3" cy="14.6" r="1.1" fill="#ff8a20"/>
<circle cx="5.8" cy="8.3" r="3.2" fill="#ffe2bc"/>
<path d="M2.6 8.6 Q2.6 5 5.8 5 Q9 5 9 8.6 Q7.5 6.8 5.8 7.3 Q4 6.8 2.6 8.6Z" fill="#a64a18"/>
</svg>
<svg style="left:67px;top:399px;" width="17" height="17" viewBox="0 0 17 17">
<defs><linearGradient id="lg" x1="0" y1="0" x2="0" y2="1"><stop offset="0" stop-color="#e8fbff"/><stop offset="0.45" stop-color="#bfefff"/><stop offset="1" stop-color="#1a98f8"/></linearGradient></defs>
<line x1="2.3" y1="15.2" x2="6.8" y2="10.6" stroke="#1468e0" stroke-width="2.6" stroke-linecap="round"/>
<circle cx="10.5" cy="6.6" r="4.7" fill="url(#lg)" stroke="#8c9ad8" stroke-width="1.1"/>
<circle cx="11.5" cy="13.5" r="3.1" fill="#fff" stroke="#c84a0a" stroke-width="1.5"/>
<line x1="9.5" y1="11.5" x2="13.5" y2="15.5" stroke="#c84a0a" stroke-width="1.2"/>
</svg>
<div style="top:400.19px;font-size:11px;line-height:14px;left:85px;letter-spacing:-0.12px;width:217px;overflow:hidden;">MDQ Query</div>
<div style="left:22px;top:427px;width:28px;height:1px;background:repeating-linear-gradient(90deg,#808080 0 1px,transparent 1px 2px);"></div>
<svg style="left:50px;top:419px;" width="16" height="16" viewBox="0 0 16 16">
<path d="M7 11.5 Q7 6.5 10.5 6.5 Q14.5 6.5 15 11.5 Z" fill="#6ad860" stroke="#2a8a2a" stroke-width="0.8"/>
<circle cx="15.2" cy="9.8" r="1.1" fill="#ff8a20"/>
<circle cx="10.5" cy="3.6" r="3.1" fill="#ffdcb4"/>
<path d="M7.4 3.8 Q7.4 0.4 10.5 0.4 Q13.6 0.4 13.6 3.8 Q12 2.2 10.5 2.6 Q9 2.2 7.4 3.8Z" fill="#f2a800"/>
<path d="M1.5 16 Q1.5 11.2 5.8 11.2 Q10.2 11.2 10.2 16 Z" fill="#3aa8f8" stroke="#1a50c0" stroke-width="0.8"/>
<circle cx="1.2" cy="14.6" r="1.1" fill="#ff8a20"/><circle cx="10.3" cy="14.6" r="1.1" fill="#ff8a20"/>
<circle cx="5.8" cy="8.3" r="3.2" fill="#ffe2bc"/>
<path d="M2.6 8.6 Q2.6 5 5.8 5 Q9 5 9 8.6 Q7.5 6.8 5.8 7.3 Q4 6.8 2.6 8.6Z" fill="#a64a18"/>
</svg>
<svg style="left:67px;top:418px;" width="17" height="17" viewBox="0 0 17 17">
<defs><linearGradient id="lg" x1="0" y1="0" x2="0" y2="1"><stop offset="0" stop-color="#e8fbff"/><stop offset="0.45" stop-color="#bfefff"/><stop offset="1" stop-color="#1a98f8"/></linearGradient></defs>
<line x1="2.3" y1="15.2" x2="6.8" y2="10.6" stroke="#1468e0" stroke-width="2.6" stroke-linecap="round"/>
<circle cx="10.5" cy="6.6" r="4.7" fill="url(#lg)" stroke="#8c9ad8" stroke-width="1.1"/>
<circle cx="11.5" cy="13.5" r="3.1" fill="#fff" stroke="#c84a0a" stroke-width="1.5"/>
<line x1="9.5" y1="11.5" x2="13.5" y2="15.5" stroke="#c84a0a" stroke-width="1.2"/>
</svg>
<div style="top:419.19px;font-size:11px;line-height:14px;left:85px;letter-spacing:-0.12px;width:217px;overflow:hidden;">Meter Transactions Query</div>
<div style="left:22px;top:446px;width:28px;height:1px;background:repeating-linear-gradient(90deg,#808080 0 1px,transparent 1px 2px);"></div>
<svg style="left:52px;top:438px;" width="13" height="16" viewBox="0 0 13 16">
<defs><linearGradient id="dg" x1="0" y1="0" x2="1" y2="1"><stop offset="0.55" stop-color="#ffffff"/><stop offset="1" stop-color="#c8d0e0"/></linearGradient></defs>
<path d="M0.5 0.5 H8.5 L11.5 3.5 V14.5 H0.5 Z" fill="url(#dg)" stroke="#a8b8d0" stroke-width="1"/>
<path d="M8.5 0.5 L11.5 3.5 V14.5 H1" fill="none" stroke="#2c3c54" stroke-width="1.4"/>
<path d="M8 1 V4 H11" fill="#e0e8f0" stroke="#5a6a80" stroke-width="0.8"/>
</svg>
<svg style="left:67px;top:437px;" width="17" height="17" viewBox="0 0 17 17">
<defs><linearGradient id="lg" x1="0" y1="0" x2="0" y2="1"><stop offset="0" stop-color="#e8fbff"/><stop offset="0.45" stop-color="#bfefff"/><stop offset="1" stop-color="#1a98f8"/></linearGradient></defs>
<line x1="2.3" y1="15.2" x2="6.8" y2="10.6" stroke="#1468e0" stroke-width="2.6" stroke-linecap="round"/>
<circle cx="10.5" cy="6.6" r="4.7" fill="url(#lg)" stroke="#8c9ad8" stroke-width="1.1"/>
<circle cx="11.5" cy="13.5" r="3.1" fill="#fff" stroke="#c84a0a" stroke-width="1.5"/>
<line x1="9.5" y1="11.5" x2="13.5" y2="15.5" stroke="#c84a0a" stroke-width="1.2"/>
</svg>
<div style="top:438.19px;font-size:11px;line-height:14px;left:85px;letter-spacing:-0.12px;width:217px;overflow:hidden;">Operator Confirmation</div>
<div style="left:22px;top:465px;width:28px;height:1px;background:repeating-linear-gradient(90deg,#808080 0 1px,transparent 1px 2px);"></div>
<svg style="left:52px;top:457px;" width="13" height="16" viewBox="0 0 13 16">
<defs><linearGradient id="dg" x1="0" y1="0" x2="1" y2="1"><stop offset="0.55" stop-color="#ffffff"/><stop offset="1" stop-color="#c8d0e0"/></linearGradient></defs>
<path d="M0.5 0.5 H8.5 L11.5 3.5 V14.5 H0.5 Z" fill="url(#dg)" stroke="#a8b8d0" stroke-width="1"/>
<path d="M8.5 0.5 L11.5 3.5 V14.5 H1" fill="none" stroke="#2c3c54" stroke-width="1.4"/>
<path d="M8 1 V4 H11" fill="#e0e8f0" stroke="#5a6a80" stroke-width="0.8"/>
</svg>
<svg style="left:67px;top:456px;" width="17" height="17" viewBox="0 0 17 17">
<defs><linearGradient id="lg" x1="0" y1="0" x2="0" y2="1"><stop offset="0" stop-color="#e8fbff"/><stop offset="0.45" stop-color="#bfefff"/><stop offset="1" stop-color="#1a98f8"/></linearGradient></defs>
<line x1="2.3" y1="15.2" x2="6.8" y2="10.6" stroke="#1468e0" stroke-width="2.6" stroke-linecap="round"/>
<circle cx="10.5" cy="6.6" r="4.7" fill="url(#lg)" stroke="#8c9ad8" stroke-width="1.1"/>
<circle cx="11.5" cy="13.5" r="3.1" fill="#fff" stroke="#c84a0a" stroke-width="1.5"/>
<line x1="9.5" y1="11.5" x2="13.5" y2="15.5" stroke="#c84a0a" stroke-width="1.2"/>
</svg>
<div style="top:457.19px;font-size:11px;line-height:14px;left:85px;letter-spacing:-0.12px;width:217px;overflow:hidden;">Operator Confirmation Daily By Station Name</div>
<div style="left:22px;top:484px;width:28px;height:1px;background:repeating-linear-gradient(90deg,#808080 0 1px,transparent 1px 2px);"></div>
<svg style="left:52px;top:476px;" width="13" height="16" viewBox="0 0 13 16">
<defs><linearGradient id="dg" x1="0" y1="0" x2="1" y2="1"><stop offset="0.55" stop-color="#ffffff"/><stop offset="1" stop-color="#c8d0e0"/></linearGradient></defs>
<path d="M0.5 0.5 H8.5 L11.5 3.5 V14.5 H0.5 Z" fill="url(#dg)" stroke="#a8b8d0" stroke-width="1"/>
<path d="M8.5 0.5 L11.5 3.5 V14.5 H1" fill="none" stroke="#2c3c54" stroke-width="1.4"/>
<path d="M8 1 V4 H11" fill="#e0e8f0" stroke="#5a6a80" stroke-width="0.8"/>
</svg>
<svg style="left:67px;top:475px;" width="17" height="17" viewBox="0 0 17 17">
<defs><linearGradient id="lg" x1="0" y1="0" x2="0" y2="1"><stop offset="0" stop-color="#e8fbff"/><stop offset="0.45" stop-color="#bfefff"/><stop offset="1" stop-color="#1a98f8"/></linearGradient></defs>
<line x1="2.3" y1="15.2" x2="6.8" y2="10.6" stroke="#1468e0" stroke-width="2.6" stroke-linecap="round"/>
<circle cx="10.5" cy="6.6" r="4.7" fill="url(#lg)" stroke="#8c9ad8" stroke-width="1.1"/>
<circle cx="11.5" cy="13.5" r="3.1" fill="#fff" stroke="#c84a0a" stroke-width="1.5"/>
<line x1="9.5" y1="11.5" x2="13.5" y2="15.5" stroke="#c84a0a" stroke-width="1.2"/>
</svg>
<div style="top:476.19px;font-size:11px;line-height:14px;left:85px;letter-spacing:-0.12px;width:217px;overflow:hidden;">Operator Confirmation Daily By Station Num..</div>
<div style="left:22px;top:503px;width:28px;height:1px;background:repeating-linear-gradient(90deg,#808080 0 1px,transparent 1px 2px);"></div>
<svg style="left:52px;top:495px;" width="13" height="16" viewBox="0 0 13 16">
<defs><linearGradient id="dg" x1="0" y1="0" x2="1" y2="1"><stop offset="0.55" stop-color="#ffffff"/><stop offset="1" stop-color="#c8d0e0"/></linearGradient></defs>
<path d="M0.5 0.5 H8.5 L11.5 3.5 V14.5 H0.5 Z" fill="url(#dg)" stroke="#a8b8d0" stroke-width="1"/>
<path d="M8.5 0.5 L11.5 3.5 V14.5 H1" fill="none" stroke="#2c3c54" stroke-width="1.4"/>
<path d="M8 1 V4 H11" fill="#e0e8f0" stroke="#5a6a80" stroke-width="0.8"/>
</svg>
<svg style="left:67px;top:494px;" width="17" height="17" viewBox="0 0 17 17">
<defs><linearGradient id="lg" x1="0" y1="0" x2="0" y2="1"><stop offset="0" stop-color="#e8fbff"/><stop offset="0.45" stop-color="#bfefff"/><stop offset="1" stop-color="#1a98f8"/></linearGradient></defs>
<line x1="2.3" y1="15.2" x2="6.8" y2="10.6" stroke="#1468e0" stroke-width="2.6" stroke-linecap="round"/>
<circle cx="10.5" cy="6.6" r="4.7" fill="url(#lg)" stroke="#8c9ad8" stroke-width="1.1"/>
<circle cx="11.5" cy="13.5" r="3.1" fill="#fff" stroke="#c84a0a" stroke-width="1.5"/>
<line x1="9.5" y1="11.5" x2="13.5" y2="15.5" stroke="#c84a0a" stroke-width="1.2"/>
</svg>
<div style="top:495.19px;font-size:11px;line-height:14px;left:85px;letter-spacing:-0.12px;width:217px;overflow:hidden;">Sales Order by Field/Location</div>
<div style="left:22px;top:522px;width:28px;height:1px;background:repeating-linear-gradient(90deg,#808080 0 1px,transparent 1px 2px);"></div>
<svg style="left:52px;top:514px;" width="13" height="16" viewBox="0 0 13 16">
<defs><linearGradient id="dg" x1="0" y1="0" x2="1" y2="1"><stop offset="0.55" stop-color="#ffffff"/><stop offset="1" stop-color="#c8d0e0"/></linearGradient></defs>
<path d="M0.5 0.5 H8.5 L11.5 3.5 V14.5 H0.5 Z" fill="url(#dg)" stroke="#a8b8d0" stroke-width="1"/>
<path d="M8.5 0.5 L11.5 3.5 V14.5 H1" fill="none" stroke="#2c3c54" stroke-width="1.4"/>
<path d="M8 1 V4 H11" fill="#e0e8f0" stroke="#5a6a80" stroke-width="0.8"/>
</svg>
<svg style="left:67px;top:513px;" width="17" height="17" viewBox="0 0 17 17">
<defs><linearGradient id="lg" x1="0" y1="0" x2="0" y2="1"><stop offset="0" stop-color="#e8fbff"/><stop offset="0.45" stop-color="#bfefff"/><stop offset="1" stop-color="#1a98f8"/></linearGradient></defs>
<line x1="2.3" y1="15.2" x2="6.8" y2="10.6" stroke="#1468e0" stroke-width="2.6" stroke-linecap="round"/>
<circle cx="10.5" cy="6.6" r="4.7" fill="url(#lg)" stroke="#8c9ad8" stroke-width="1.1"/>
<circle cx="11.5" cy="13.5" r="3.1" fill="#fff" stroke="#c84a0a" stroke-width="1.5"/>
<line x1="9.5" y1="11.5" x2="13.5" y2="15.5" stroke="#c84a0a" stroke-width="1.2"/>
</svg>
<div style="top:514.19px;font-size:11px;line-height:14px;left:85px;letter-spacing:-0.12px;width:217px;overflow:hidden;">Sales Order K Pricing Detail</div>
<div style="left:22px;top:541px;width:28px;height:1px;background:repeating-linear-gradient(90deg,#808080 0 1px,transparent 1px 2px);"></div>
<svg style="left:52px;top:533px;" width="13" height="16" viewBox="0 0 13 16">
<defs><linearGradient id="dg" x1="0" y1="0" x2="1" y2="1"><stop offset="0.55" stop-color="#ffffff"/><stop offset="1" stop-color="#c8d0e0"/></linearGradient></defs>
<path d="M0.5 0.5 H8.5 L11.5 3.5 V14.5 H0.5 Z" fill="url(#dg)" stroke="#a8b8d0" stroke-width="1"/>
<path d="M8.5 0.5 L11.5 3.5 V14.5 H1" fill="none" stroke="#2c3c54" stroke-width="1.4"/>
<path d="M8 1 V4 H11" fill="#e0e8f0" stroke="#5a6a80" stroke-width="0.8"/>
</svg>
<svg style="left:67px;top:532px;" width="17" height="17" viewBox="0 0 17 17">
<defs><linearGradient id="lg" x1="0" y1="0" x2="0" y2="1"><stop offset="0" stop-color="#e8fbff"/><stop offset="0.45" stop-color="#bfefff"/><stop offset="1" stop-color="#1a98f8"/></linearGradient></defs>
<line x1="2.3" y1="15.2" x2="6.8" y2="10.6" stroke="#1468e0" stroke-width="2.6" stroke-linecap="round"/>
<circle cx="10.5" cy="6.6" r="4.7" fill="url(#lg)" stroke="#8c9ad8" stroke-width="1.1"/>
<circle cx="11.5" cy="13.5" r="3.1" fill="#fff" stroke="#c84a0a" stroke-width="1.5"/>
<line x1="9.5" y1="11.5" x2="13.5" y2="15.5" stroke="#c84a0a" stroke-width="1.2"/>
</svg>
<div style="top:533.19px;font-size:11px;line-height:14px;left:85px;letter-spacing:-0.12px;width:217px;overflow:hidden;">Sales Order Pricing Detail w/adjs</div>
<div style="left:22px;top:560px;width:28px;height:1px;background:repeating-linear-gradient(90deg,#808080 0 1px,transparent 1px 2px);"></div>
<svg style="left:50px;top:552px;" width="16" height="16" viewBox="0 0 16 16">
<path d="M7 11.5 Q7 6.5 10.5 6.5 Q14.5 6.5 15 11.5 Z" fill="#6ad860" stroke="#2a8a2a" stroke-width="0.8"/>
<circle cx="15.2" cy="9.8" r="1.1" fill="#ff8a20"/>
<circle cx="10.5" cy="3.6" r="3.1" fill="#ffdcb4"/>
<path d="M7.4 3.8 Q7.4 0.4 10.5 0.4 Q13.6 0.4 13.6 3.8 Q12 2.2 10.5 2.6 Q9 2.2 7.4 3.8Z" fill="#f2a800"/>
<path d="M1.5 16 Q1.5 11.2 5.8 11.2 Q10.2 11.2 10.2 16 Z" fill="#3aa8f8" stroke="#1a50c0" stroke-width="0.8"/>
<circle cx="1.2" cy="14.6" r="1.1" fill="#ff8a20"/><circle cx="10.3" cy="14.6" r="1.1" fill="#ff8a20"/>
<circle cx="5.8" cy="8.3" r="3.2" fill="#ffe2bc"/>
<path d="M2.6 8.6 Q2.6 5 5.8 5 Q9 5 9 8.6 Q7.5 6.8 5.8 7.3 Q4 6.8 2.6 8.6Z" fill="#a64a18"/>
</svg>
<svg style="left:67px;top:551px;" width="17" height="17" viewBox="0 0 17 17">
<defs><linearGradient id="lg" x1="0" y1="0" x2="0" y2="1"><stop offset="0" stop-color="#e8fbff"/><stop offset="0.45" stop-color="#bfefff"/><stop offset="1" stop-color="#1a98f8"/></linearGradient></defs>
<line x1="2.3" y1="15.2" x2="6.8" y2="10.6" stroke="#1468e0" stroke-width="2.6" stroke-linecap="round"/>
<circle cx="10.5" cy="6.6" r="4.7" fill="url(#lg)" stroke="#8c9ad8" stroke-width="1.1"/>
<circle cx="11.5" cy="13.5" r="3.1" fill="#fff" stroke="#c84a0a" stroke-width="1.5"/>
<line x1="9.5" y1="11.5" x2="13.5" y2="15.5" stroke="#c84a0a" stroke-width="1.2"/>
</svg>
<div style="top:552.19px;font-size:11px;line-height:14px;left:85px;letter-spacing:-0.12px;width:217px;overflow:hidden;">Station Scheduled Volume</div>
<div style="left:22px;top:579px;width:28px;height:1px;background:repeating-linear-gradient(90deg,#808080 0 1px,transparent 1px 2px);"></div>
<svg style="left:50px;top:571px;" width="16" height="16" viewBox="0 0 16 16">
<path d="M7 11.5 Q7 6.5 10.5 6.5 Q14.5 6.5 15 11.5 Z" fill="#6ad860" stroke="#2a8a2a" stroke-width="0.8"/>
<circle cx="15.2" cy="9.8" r="1.1" fill="#ff8a20"/>
<circle cx="10.5" cy="3.6" r="3.1" fill="#ffdcb4"/>
<path d="M7.4 3.8 Q7.4 0.4 10.5 0.4 Q13.6 0.4 13.6 3.8 Q12 2.2 10.5 2.6 Q9 2.2 7.4 3.8Z" fill="#f2a800"/>
<path d="M1.5 16 Q1.5 11.2 5.8 11.2 Q10.2 11.2 10.2 16 Z" fill="#3aa8f8" stroke="#1a50c0" stroke-width="0.8"/>
<circle cx="1.2" cy="14.6" r="1.1" fill="#ff8a20"/><circle cx="10.3" cy="14.6" r="1.1" fill="#ff8a20"/>
<circle cx="5.8" cy="8.3" r="3.2" fill="#ffe2bc"/>
<path d="M2.6 8.6 Q2.6 5 5.8 5 Q9 5 9 8.6 Q7.5 6.8 5.8 7.3 Q4 6.8 2.6 8.6Z" fill="#a64a18"/>
</svg>
<svg style="left:67px;top:570px;" width="17" height="17" viewBox="0 0 17 17">
<defs><linearGradient id="lg" x1="0" y1="0" x2="0" y2="1"><stop offset="0" stop-color="#e8fbff"/><stop offset="0.45" stop-color="#bfefff"/><stop offset="1" stop-color="#1a98f8"/></linearGradient></defs>
<line x1="2.3" y1="15.2" x2="6.8" y2="10.6" stroke="#1468e0" stroke-width="2.6" stroke-linecap="round"/>
<circle cx="10.5" cy="6.6" r="4.7" fill="url(#lg)" stroke="#8c9ad8" stroke-width="1.1"/>
<circle cx="11.5" cy="13.5" r="3.1" fill="#fff" stroke="#c84a0a" stroke-width="1.5"/>
<line x1="9.5" y1="11.5" x2="13.5" y2="15.5" stroke="#c84a0a" stroke-width="1.2"/>
</svg>
<div style="top:571.19px;font-size:11px;line-height:14px;left:85px;letter-spacing:-0.12px;width:217px;overflow:hidden;">Transport Bid/Quick Deal Entry</div>
<svg style="left:17px;top:594.5px;" width="9" height="9" viewBox="0 0 9 9"><defs><linearGradient id="eg" x1="0" y1="0" x2="0" y2="1"><stop offset="0" stop-color="#ffffff"/><stop offset="1" stop-color="#e4dcc8"/></linearGradient></defs><rect x="0.5" y="0.5" width="8" height="8" rx="1" fill="url(#eg)" stroke="#7890b0"/><line x1="2" y1="4.5" x2="7" y2="4.5" stroke="#000" stroke-width="1.2"/><line x1="4.5" y1="2" x2="4.5" y2="7" stroke="#000" stroke-width="1.2"/></svg>
<svg style="left:30px;top:592.5px;" width="16" height="13" viewBox="0 0 16 13">
<defs><linearGradient id="fg" x1="0" y1="0" x2="1" y2="1"><stop offset="0" stop-color="#fffbe8"/><stop offset="1" stop-color="#f0cc30"/></linearGradient></defs>
<path d="M0.5 0.5 H6.5 L7.5 1.5 H13.5 V10.5 H0.5 Z" fill="url(#fg)" stroke="#e0a040" stroke-width="1"/>
<path d="M2 3.5 H12.5" stroke="#e8c070" stroke-width="0.9"/>
<path d="M2 3 L3 2 M2 4.5 V8" stroke="#f0d080" stroke-width="0.8"/>
</svg>
<div style="top:591.69px;font-size:11px;line-height:14px;left:48px;letter-spacing:-0.12px;">General Reports</div>
<svg style="left:17px;top:614.5px;" width="9" height="9" viewBox="0 0 9 9"><defs><linearGradient id="eg" x1="0" y1="0" x2="0" y2="1"><stop offset="0" stop-color="#ffffff"/><stop offset="1" stop-color="#e4dcc8"/></linearGradient></defs><rect x="0.5" y="0.5" width="8" height="8" rx="1" fill="url(#eg)" stroke="#7890b0"/><line x1="2" y1="4.5" x2="7" y2="4.5" stroke="#000" stroke-width="1.2"/><line x1="4.5" y1="2" x2="4.5" y2="7" stroke="#000" stroke-width="1.2"/></svg>
<svg style="left:30px;top:612.5px;" width="16" height="13" viewBox="0 0 16 13">
<defs><linearGradient id="fg" x1="0" y1="0" x2="1" y2="1"><stop offset="0" stop-color="#fffbe8"/><stop offset="1" stop-color="#f0cc30"/></linearGradient></defs>
<path d="M0.5 0.5 H6.5 L7.5 1.5 H13.5 V10.5 H0.5 Z" fill="url(#fg)" stroke="#e0a040" stroke-width="1"/>
<path d="M2 3.5 H12.5" stroke="#e8c070" stroke-width="0.9"/>
<path d="M2 3 L3 2 M2 4.5 V8" stroke="#f0d080" stroke-width="0.8"/>
</svg>
<div style="top:611.69px;font-size:11px;line-height:14px;left:48px;letter-spacing:-0.12px;">Margin/P&amp;L Reports</div>
<svg style="left:17px;top:634.5px;" width="9" height="9" viewBox="0 0 9 9"><defs><linearGradient id="eg" x1="0" y1="0" x2="0" y2="1"><stop offset="0" stop-color="#ffffff"/><stop offset="1" stop-color="#e4dcc8"/></linearGradient></defs><rect x="0.5" y="0.5" width="8" height="8" rx="1" fill="url(#eg)" stroke="#7890b0"/><line x1="2" y1="4.5" x2="7" y2="4.5" stroke="#000" stroke-width="1.2"/><line x1="4.5" y1="2" x2="4.5" y2="7" stroke="#000" stroke-width="1.2"/></svg>
<svg style="left:30px;top:632.5px;" width="16" height="13" viewBox="0 0 16 13">
<defs><linearGradient id="fg" x1="0" y1="0" x2="1" y2="1"><stop offset="0" stop-color="#fffbe8"/><stop offset="1" stop-color="#f0cc30"/></linearGradient></defs>
<path d="M0.5 0.5 H6.5 L7.5 1.5 H13.5 V10.5 H0.5 Z" fill="url(#fg)" stroke="#e0a040" stroke-width="1"/>
<path d="M2 3.5 H12.5" stroke="#e8c070" stroke-width="0.9"/>
<path d="M2 3 L3 2 M2 4.5 V8" stroke="#f0d080" stroke-width="0.8"/>
</svg>
<div style="top:631.69px;font-size:11px;line-height:14px;left:48px;letter-spacing:-0.12px;">Move Reports</div>
<svg style="left:17px;top:654.5px;" width="9" height="9" viewBox="0 0 9 9"><defs><linearGradient id="eg" x1="0" y1="0" x2="0" y2="1"><stop offset="0" stop-color="#ffffff"/><stop offset="1" stop-color="#e4dcc8"/></linearGradient></defs><rect x="0.5" y="0.5" width="8" height="8" rx="1" fill="url(#eg)" stroke="#7890b0"/><line x1="2" y1="4.5" x2="7" y2="4.5" stroke="#000" stroke-width="1.2"/><line x1="4.5" y1="2" x2="4.5" y2="7" stroke="#000" stroke-width="1.2"/></svg>
<svg style="left:30px;top:652.5px;" width="16" height="13" viewBox="0 0 16 13">
<defs><linearGradient id="fg" x1="0" y1="0" x2="1" y2="1"><stop offset="0" stop-color="#fffbe8"/><stop offset="1" stop-color="#f0cc30"/></linearGradient></defs>
<path d="M0.5 0.5 H6.5 L7.5 1.5 H13.5 V10.5 H0.5 Z" fill="url(#fg)" stroke="#e0a040" stroke-width="1"/>
<path d="M2 3.5 H12.5" stroke="#e8c070" stroke-width="0.9"/>
<path d="M2 3 L3 2 M2 4.5 V8" stroke="#f0d080" stroke-width="0.8"/>
</svg>
<div style="top:651.69px;font-size:11px;line-height:14px;left:48px;letter-spacing:-0.12px;">P&amp;L Reports</div>
<svg style="left:17px;top:674.5px;" width="9" height="9" viewBox="0 0 9 9"><defs><linearGradient id="eg" x1="0" y1="0" x2="0" y2="1"><stop offset="0" stop-color="#ffffff"/><stop offset="1" stop-color="#e4dcc8"/></linearGradient></defs><rect x="0.5" y="0.5" width="8" height="8" rx="1" fill="url(#eg)" stroke="#7890b0"/><line x1="2" y1="4.5" x2="7" y2="4.5" stroke="#000" stroke-width="1.2"/><line x1="4.5" y1="2" x2="4.5" y2="7" stroke="#000" stroke-width="1.2"/></svg>
<svg style="left:30px;top:672.5px;" width="16" height="13" viewBox="0 0 16 13">
<defs><linearGradient id="fg" x1="0" y1="0" x2="1" y2="1"><stop offset="0" stop-color="#fffbe8"/><stop offset="1" stop-color="#f0cc30"/></linearGradient></defs>
<path d="M0.5 0.5 H6.5 L7.5 1.5 H13.5 V10.5 H0.5 Z" fill="url(#fg)" stroke="#e0a040" stroke-width="1"/>
<path d="M2 3.5 H12.5" stroke="#e8c070" stroke-width="0.9"/>
<path d="M2 3 L3 2 M2 4.5 V8" stroke="#f0d080" stroke-width="0.8"/>
</svg>
<div style="top:671.69px;font-size:11px;line-height:14px;left:48px;letter-spacing:-0.12px;">T Account Reports</div>
<svg style="left:17px;top:694.5px;" width="9" height="9" viewBox="0 0 9 9"><defs><linearGradient id="eg" x1="0" y1="0" x2="0" y2="1"><stop offset="0" stop-color="#ffffff"/><stop offset="1" stop-color="#e4dcc8"/></linearGradient></defs><rect x="0.5" y="0.5" width="8" height="8" rx="1" fill="url(#eg)" stroke="#7890b0"/><line x1="2" y1="4.5" x2="7" y2="4.5" stroke="#000" stroke-width="1.2"/><line x1="4.5" y1="2" x2="4.5" y2="7" stroke="#000" stroke-width="1.2"/></svg>
<svg style="left:30px;top:692.5px;" width="16" height="13" viewBox="0 0 16 13">
<defs><linearGradient id="fg" x1="0" y1="0" x2="1" y2="1"><stop offset="0" stop-color="#fffbe8"/><stop offset="1" stop-color="#f0cc30"/></linearGradient></defs>
<path d="M0.5 0.5 H6.5 L7.5 1.5 H13.5 V10.5 H0.5 Z" fill="url(#fg)" stroke="#e0a040" stroke-width="1"/>
<path d="M2 3.5 H12.5" stroke="#e8c070" stroke-width="0.9"/>
<path d="M2 3 L3 2 M2 4.5 V8" stroke="#f0d080" stroke-width="0.8"/>
</svg>
<div style="top:691.69px;font-size:11px;line-height:14px;left:48px;letter-spacing:-0.12px;">Trade Room</div>
<svg style="left:17px;top:714.5px;" width="9" height="9" viewBox="0 0 9 9"><defs><linearGradient id="eg" x1="0" y1="0" x2="0" y2="1"><stop offset="0" stop-color="#ffffff"/><stop offset="1" stop-color="#e4dcc8"/></linearGradient></defs><rect x="0.5" y="0.5" width="8" height="8" rx="1" fill="url(#eg)" stroke="#7890b0"/><line x1="2" y1="4.5" x2="7" y2="4.5" stroke="#000" stroke-width="1.2"/><line x1="4.5" y1="2" x2="4.5" y2="7" stroke="#000" stroke-width="1.2"/></svg>
<svg style="left:30px;top:712.5px;" width="16" height="13" viewBox="0 0 16 13">
<defs><linearGradient id="fg" x1="0" y1="0" x2="1" y2="1"><stop offset="0" stop-color="#fffbe8"/><stop offset="1" stop-color="#f0cc30"/></linearGradient></defs>
<path d="M0.5 0.5 H6.5 L7.5 1.5 H13.5 V10.5 H0.5 Z" fill="url(#fg)" stroke="#e0a040" stroke-width="1"/>
<path d="M2 3.5 H12.5" stroke="#e8c070" stroke-width="0.9"/>
<path d="M2 3 L3 2 M2 4.5 V8" stroke="#f0d080" stroke-width="0.8"/>
</svg>
<div style="top:711.69px;font-size:11px;line-height:14px;left:48px;letter-spacing:-0.12px;">Transporter Reports</div>
<svg style="left:17px;top:734.5px;" width="9" height="9" viewBox="0 0 9 9"><defs><linearGradient id="eg" x1="0" y1="0" x2="0" y2="1"><stop offset="0" stop-color="#ffffff"/><stop offset="1" stop-color="#e4dcc8"/></linearGradient></defs><rect x="0.5" y="0.5" width="8" height="8" rx="1" fill="url(#eg)" stroke="#7890b0"/><line x1="2" y1="4.5" x2="7" y2="4.5" stroke="#000" stroke-width="1.2"/><line x1="4.5" y1="2" x2="4.5" y2="7" stroke="#000" stroke-width="1.2"/></svg>
<svg style="left:30px;top:732.5px;" width="16" height="13" viewBox="0 0 16 13">
<defs><linearGradient id="fg" x1="0" y1="0" x2="1" y2="1"><stop offset="0" stop-color="#fffbe8"/><stop offset="1" stop-color="#f0cc30"/></linearGradient></defs>
<path d="M0.5 0.5 H6.5 L7.5 1.5 H13.5 V10.5 H0.5 Z" fill="url(#fg)" stroke="#e0a040" stroke-width="1"/>
<path d="M2 3.5 H12.5" stroke="#e8c070" stroke-width="0.9"/>
<path d="M2 3 L3 2 M2 4.5 V8" stroke="#f0d080" stroke-width="0.8"/>
</svg>
<div style="top:731.69px;font-size:11px;line-height:14px;left:48px;letter-spacing:-0.12px;">Volume Reports</div>
<div style="left:3px;top:835px;width:302px;height:7px;background:linear-gradient(#d8d4cc,#8c8c8c);border-bottom:1px solid #747474;box-sizing:border-box;"></div>
<svg style="left:137px;top:835px;" width="38" height="4" viewBox="0 0 38 4"><rect x="1" y="2" width="2" height="2" fill="#fff"/><rect x="0" y="1" width="2" height="2" fill="#0a1430"/><rect x="5" y="2" width="2" height="2" fill="#fff"/><rect x="4" y="1" width="2" height="2" fill="#0a1430"/><rect x="9" y="2" width="2" height="2" fill="#fff"/><rect x="8" y="1" width="2" height="2" fill="#0a1430"/><rect x="13" y="2" width="2" height="2" fill="#fff"/><rect x="12" y="1" width="2" height="2" fill="#0a1430"/><rect x="17" y="2" width="2" height="2" fill="#fff"/><rect x="16" y="1" width="2" height="2" fill="#0a1430"/><rect x="21" y="2" width="2" height="2" fill="#fff"/><rect x="20" y="1" width="2" height="2" fill="#0a1430"/><rect x="25" y="2" width="2" height="2" fill="#fff"/><rect x="24" y="1" width="2" height="2" fill="#0a1430"/><rect x="29" y="2" width="2" height="2" fill="#fff"/><rect x="28" y="1" width="2" height="2" fill="#0a1430"/><rect x="33" y="2" width="2" height="2" fill="#fff"/><rect x="32" y="1" width="2" height="2" fill="#0a1430"/></svg>
<div style="left:3px;top:842px;width:302px;height:30px;background:linear-gradient(#fcfcfb,#eeece8 50%,#d9d5cc);border-bottom:1px solid #808080;box-sizing:border-box;"></div>
<div style="top:850.19px;font-size:11px;line-height:14px;left:30px;font-weight:bold;letter-spacing:0.45px;">Reference Data</div>
<svg style="left:9px;top:849px;" width="16" height="16" viewBox="0 0 16 16"><rect x="0.5" y="1.5" width="14" height="12" fill="#e8f0fa" stroke="#4a7ac0"/><rect x="0.5" y="1.5" width="14" height="2" fill="#7aa0d8"/><path d="M2 6 H4 M2 9 H4" stroke="#3a6ab0"/><circle cx="10" cy="9" r="3" fill="#c8dcf0" stroke="#6a9ad0"/><line x1="12" y1="11" x2="15" y2="14" stroke="#d08040" stroke-width="1.2"/></svg>
<div style="left:3px;top:872px;width:302px;height:30px;background:linear-gradient(#fcfcfb,#eeece8 50%,#d9d5cc);border-bottom:1px solid #808080;box-sizing:border-box;"></div>
<div style="top:880.19px;font-size:11px;line-height:14px;left:30px;font-weight:bold;letter-spacing:0.45px;">Contract Administration</div>
<svg style="left:9px;top:879px;" width="16" height="16" viewBox="0 0 16 16"><path d="M2 1.5 H14 V14.5 H2 Z" fill="#cfe0f6" stroke="#6a90c8"/><path d="M4 14 L12 4 L14 6 L6 15 Z" fill="#f0c860" stroke="#b08030"/></svg>
<div style="left:3px;top:902px;width:302px;height:30px;background:#d4d4da;border-bottom:1px solid #808080;box-sizing:border-box;"></div>
<div style="top:910.19px;font-size:11px;line-height:14px;left:30px;font-weight:bold;letter-spacing:0.45px;">Deal Making</div>
<svg style="left:9px;top:909px;" width="16" height="16" viewBox="0 0 16 16">
<path d="M7 11.5 Q7 6.5 10.5 6.5 Q14.5 6.5 15 11.5 Z" fill="#6ad860" stroke="#2a8a2a" stroke-width="0.8"/>
<circle cx="15.2" cy="9.8" r="1.1" fill="#ff8a20"/>
<circle cx="10.5" cy="3.6" r="3.1" fill="#ffdcb4"/>
<path d="M7.4 3.8 Q7.4 0.4 10.5 0.4 Q13.6 0.4 13.6 3.8 Q12 2.2 10.5 2.6 Q9 2.2 7.4 3.8Z" fill="#f2a800"/>
<path d="M1.5 16 Q1.5 11.2 5.8 11.2 Q10.2 11.2 10.2 16 Z" fill="#3aa8f8" stroke="#1a50c0" stroke-width="0.8"/>
<circle cx="1.2" cy="14.6" r="1.1" fill="#ff8a20"/><circle cx="10.3" cy="14.6" r="1.1" fill="#ff8a20"/>
<circle cx="5.8" cy="8.3" r="3.2" fill="#ffe2bc"/>
<path d="M2.6 8.6 Q2.6 5 5.8 5 Q9 5 9 8.6 Q7.5 6.8 5.8 7.3 Q4 6.8 2.6 8.6Z" fill="#a64a18"/>
</svg>
<div style="left:3px;top:932px;width:302px;height:30px;background:linear-gradient(#fcfcfb,#eeece8 50%,#d9d5cc);border-bottom:1px solid #808080;box-sizing:border-box;"></div>
<div style="top:940.19px;font-size:11px;line-height:14px;left:30px;font-weight:bold;letter-spacing:0.45px;">Scheduling</div>
<svg style="left:9px;top:939px;" width="16" height="16" viewBox="0 0 16 16"><rect x="1.5" y="1.5" width="13" height="13" fill="#fff" stroke="#6a90c8"/><rect x="1.5" y="1.5" width="13" height="3" fill="#e86040"/><path d="M4 7 H12 M4 10 H12 M6 5 V13 M10 5 V13" stroke="#60a060"/></svg>
<div style="left:3px;top:962px;width:302px;height:30px;background:linear-gradient(#fcfcfb,#eeece8 50%,#d9d5cc);border-bottom:1px solid #808080;box-sizing:border-box;"></div>
<div style="top:970.19px;font-size:11px;line-height:14px;left:30px;font-weight:bold;letter-spacing:0.45px;">Owner Management</div>
<svg style="left:9px;top:969px;" width="16" height="16" viewBox="0 0 16 16"><circle cx="5" cy="4" r="2.5" fill="#e0b080" stroke="#806040"/><path d="M1 12 Q1 7 5 7 Q9 7 9 12Z" fill="#80a060"/><circle cx="10" cy="7" r="2.5" fill="#e8c8a0" stroke="#806040"/><path d="M6 15 Q6 10 10 10 Q14 10 14 15Z" fill="#6090d0"/></svg>
<div style="left:3px;top:992px;width:302px;height:30px;background:linear-gradient(#fcfcfb,#eeece8 50%,#d9d5cc);border-bottom:1px solid #808080;box-sizing:border-box;"></div>
<div style="top:1000.19px;font-size:11px;line-height:14px;left:30px;font-weight:bold;letter-spacing:0.45px;">Volume Management</div>
<svg style="left:9px;top:999px;" width="16" height="16" viewBox="0 0 16 16"><circle cx="11" cy="5" r="4" fill="#d0e4ff" stroke="#4a70c0"/><text x="9" y="8" font-size="6" fill="#203070" font-family="Liberation Sans">D</text><circle cx="6" cy="11" r="4" fill="#f0d890" stroke="#b08a30"/><text x="3.5" y="13.5" font-size="5" fill="#604010" font-family="Liberation Sans">R</text></svg>
<div style="left:3px;top:1022px;width:302px;height:30px;background:linear-gradient(#fcfcfb,#eeece8 50%,#d9d5cc);border-bottom:1px solid #808080;box-sizing:border-box;"></div>
<div style="top:1030.19px;font-size:11px;line-height:14px;left:30px;font-weight:bold;letter-spacing:0.45px;">Accounting</div>
<svg style="left:9px;top:1029px;" width="16" height="16" viewBox="0 0 16 16"><rect x="1.5" y="1.5" width="13" height="13" fill="#eef4fc" stroke="#5a8ad0"/><path d="M3 5 H13 M3 8 H13 M3 11 H13 M6 3 V13" stroke="#7aa0d8"/></svg>
<div style="left:3px;top:1052px;width:302px;height:30px;background:linear-gradient(#fcfcfb,#eeece8 50%,#d9d5cc);border-bottom:1px solid #808080;box-sizing:border-box;"></div>
<div style="top:1060.19px;font-size:11px;line-height:14px;left:30px;font-weight:bold;letter-spacing:0.45px;">Plant Allocations</div>
<svg style="left:9px;top:1059px;" width="16" height="16" viewBox="0 0 16 16"><ellipse cx="7" cy="3" rx="5.5" ry="2" fill="#70c0d0" stroke="#3a7a90"/><path d="M1.5 3 V13 Q7 16 12.5 13 V3" fill="#58a8c0" stroke="#3a7a90"/><circle cx="12" cy="12" r="3.5" fill="#40b040" stroke="#fff"/><path d="M10 12 H14 M12 10 V14" stroke="#fff"/></svg>
<div style="left:3px;top:1082px;width:302px;height:30px;background:linear-gradient(#fcfcfb,#eeece8 50%,#d9d5cc);border-bottom:1px solid #808080;box-sizing:border-box;"></div>
<div style="top:1090.19px;font-size:11px;line-height:14px;left:30px;font-weight:bold;letter-spacing:0.45px;">Risk Management</div>
<svg style="left:9px;top:1089px;" width="16" height="16" viewBox="0 0 16 16"><rect x="1.5" y="1.5" width="13" height="13" fill="#fff" stroke="#2a5ab0"/><rect x="3.5" y="3.5" width="7" height="5" fill="#fff" stroke="#2a5ab0"/><rect x="5.5" y="7.5" width="7" height="5" fill="#d0e0f8" stroke="#2a5ab0"/></svg>
<div style="left:3px;top:1112px;width:302px;height:29px;background:linear-gradient(#fcfcfb,#eeece8 50%,#d9d5cc);"></div>
<svg style="left:292px;top:1120px;" width="9" height="14" viewBox="0 0 9 14"><path d="M1 1 L4 3.5 L1 6 M4.5 1 L7.5 3.5 L4.5 6" stroke="#000" stroke-width="1.3" fill="none"/><path d="M1 9.5 H8 L4.5 12.5 Z" fill="#000"/></svg>
<div style="left:0px;top:1142px;width:307px;height:24px;background:#f0f0f0;"></div>
<div style="left:273px;top:1142px;width:34px;height:24px;background:#f0f2f8;"></div>
<div style="left:5px;top:1142px;width:68px;height:20px;background:#fff;border:1px solid #a0a0a0;border-top:none;border-radius:0 0 4px 4px;box-sizing:border-box;"></div>
<div style="left:74px;top:1142px;width:70px;height:19px;background:linear-gradient(#f2f2f0,#dcdad4);border:1px solid #a0a0a0;border-top:none;border-radius:0 0 4px 4px;box-sizing:border-box;"></div>
<div style="left:146px;top:1142px;width:57px;height:19px;background:linear-gradient(#f2f2f0,#dcdad4);border:1px solid #a0a0a0;border-top:none;border-radius:0 0 4px 4px;box-sizing:border-box;"></div>
<svg style="left:8px;top:1145px;" width="14" height="14" viewBox="0 0 14 14"><rect x="0.5" y="0.5" width="13" height="13" fill="#f8f8f0" stroke="#6a6a5a"/><rect x="9.5" y="0.5" width="4" height="13" fill="#e8e0b0" stroke="#6a6a5a"/><path d="M2 3 H8 M2 5.5 H8 M2 8 H8 M2 10.5 H8" stroke="#404040"/></svg>
<div style="top:1144.19px;font-size:11px;line-height:14px;left:24px;color:#1a1a2a;letter-spacing:-0.12px;">Launcher</div>
<svg style="left:77px;top:1145px;" width="14" height="14" viewBox="0 0 14 14"><rect x="0.5" y="0.5" width="13" height="13" fill="#f8f8f0" stroke="#6a6a5a"/><rect x="9.5" y="0.5" width="4" height="13" fill="#e8e0b0" stroke="#6a6a5a"/><path d="M2 3 H8 M2 5.5 H8 M2 8 H8 M2 10.5 H8" stroke="#404040"/></svg>
<div style="top:1144.19px;font-size:11px;line-height:14px;left:93px;color:#1a1a2a;letter-spacing:-0.12px;">Favorites</div>
<svg style="left:149px;top:1145px;" width="14" height="14" viewBox="0 0 14 14"><rect x="0.5" y="0.5" width="13" height="13" fill="#f8f8f0" stroke="#6a6a5a"/><rect x="9.5" y="0.5" width="4" height="13" fill="#e8e0b0" stroke="#6a6a5a"/><path d="M2 3 H8 M2 5.5 H8 M2 8 H8 M2 10.5 H8" stroke="#404040"/></svg>
<div style="top:1144.19px;font-size:11px;line-height:14px;left:165px;color:#1a1a2a;letter-spacing:-0.12px;">Guides</div>
<svg style="left:284px;top:1150px;" width="16" height="10" viewBox="0 0 16 10"><path d="M5 1 L1 5 L5 9 Z" fill="#a0a0a0"/><path d="M11 1 L15 5 L11 9 Z" fill="#a0a0a0"/></svg>
<div style="left:307px;top:63px;width:1291px;height:22px;background:#f0f2f5;"></div>
<svg style="left:310px;top:65px;" width="95" height="21" viewBox="0 0 95 21"><path d="M0.5 20 L20 1.5 Q21 0.5 23 0.5 H90 Q93 0.5 93 3.5 V20" fill="#fff" stroke="#8a8a8a"/></svg>
<svg style="left:336px;top:67px;" width="16" height="16" viewBox="0 0 16 16">
<path d="M7 11.5 Q7 6.5 10.5 6.5 Q14.5 6.5 15 11.5 Z" fill="#6ad860" stroke="#2a8a2a" stroke-width="0.8"/>
<circle cx="15.2" cy="9.8" r="1.1" fill="#ff8a20"/>
<circle cx="10.5" cy="3.6" r="3.1" fill="#ffdcb4"/>
<path d="M7.4 3.8 Q7.4 0.4 10.5 0.4 Q13.6 0.4 13.6 3.8 Q12 2.2 10.5 2.6 Q9 2.2 7.4 3.8Z" fill="#f2a800"/>
<path d="M1.5 16 Q1.5 11.2 5.8 11.2 Q10.2 11.2 10.2 16 Z" fill="#3aa8f8" stroke="#1a50c0" stroke-width="0.8"/>
<circle cx="1.2" cy="14.6" r="1.1" fill="#ff8a20"/><circle cx="10.3" cy="14.6" r="1.1" fill="#ff8a20"/>
<circle cx="5.8" cy="8.3" r="3.2" fill="#ffe2bc"/>
<path d="M2.6 8.6 Q2.6 5 5.8 5 Q9 5 9 8.6 Q7.5 6.8 5.8 7.3 Q4 6.8 2.6 8.6Z" fill="#a64a18"/>
</svg>
<div style="top:68.19px;font-size:11px;line-height:14px;left:352px;letter-spacing:-0.12px;">Deals</div>
<svg style="left:387px;top:70px;" width="10" height="10" viewBox="0 0 10 10"><path d="M1 1 L9 9 M9 1 L1 9" stroke="#000" stroke-width="1.6"/></svg>
<svg style="left:1567px;top:71px;" width="10" height="6" viewBox="0 0 10 6"><path d="M0.5 0.5 H9.5 L5 5.5 Z" fill="#000"/></svg>
<svg style="left:1585px;top:69px;" width="11" height="11" viewBox="0 0 11 11"><path d="M1 1 L10 10 M10 1 L1 10" stroke="#000" stroke-width="1.6"/></svg>
<div style="left:311px;top:84px;width:1287px;height:1079px;background:#fff;border:1px solid #8a8a8a;box-sizing:border-box;"></div>
<div style="left:402px;top:84px;width:1px;height:1px;background:#fff;"></div>
<div style="top:90.19px;font-size:11px;line-height:14px;left:218px;width:150px;text-align:right;letter-spacing:-0.12px;">Deal #</div>
<div style="left:371px;top:90px;width:105px;height:14px;background:#fff;border:1px solid #a5a5a5;box-sizing:border-box;"></div>
<div style="top:91.19px;font-size:11px;line-height:14px;left:374px;color:#000;letter-spacing:-0.12px;width:101px;overflow:hidden;">12311998-   -</div>
<div style="top:108.19px;font-size:11px;line-height:14px;left:218px;width:150px;text-align:right;letter-spacing:-0.12px;">Deal Maker</div>
<div style="left:371px;top:108px;width:105px;height:15px;background:#fff;border:1px solid #a5a5a5;box-sizing:border-box;"></div>
<div style="left:457px;top:108px;width:19px;height:15px;background:linear-gradient(#f6f6f6,#ececec 45%,#dcdcdc 50%,#d4d4d4);border:1px solid #6e6e6e;box-sizing:border-box;"></div>
<svg style="left:462.0px;top:116px;" width="9" height="5" viewBox="0 0 9 5"><path d="M0 0.5 H9 L4.5 4.8 Z" fill="#000"/></svg>
<div style="top:126.19px;font-size:11px;line-height:14px;left:218px;width:150px;text-align:right;letter-spacing:-0.12px;">Deal Type</div>
<div style="left:371px;top:126px;width:105px;height:15px;background:#fff;border:1px solid #a5a5a5;box-sizing:border-box;"></div>
<div style="left:457px;top:126px;width:19px;height:15px;background:linear-gradient(#f6f6f6,#ececec 45%,#dcdcdc 50%,#d4d4d4);border:1px solid #6e6e6e;box-sizing:border-box;"></div>
<svg style="left:462.0px;top:134px;" width="9" height="5" viewBox="0 0 9 5"><path d="M0 0.5 H9 L4.5 4.8 Z" fill="#000"/></svg>
<div style="top:144.19px;font-size:11px;line-height:14px;left:218px;width:150px;text-align:right;letter-spacing:-0.12px;">Reason</div>
<div style="left:371px;top:144px;width:105px;height:15px;background:#fff;border:1px solid #a5a5a5;box-sizing:border-box;"></div>
<div style="left:457px;top:144px;width:19px;height:15px;background:linear-gradient(#f6f6f6,#ececec 45%,#dcdcdc 50%,#d4d4d4);border:1px solid #6e6e6e;box-sizing:border-box;"></div>
<svg style="left:462.0px;top:152px;" width="9" height="5" viewBox="0 0 9 5"><path d="M0 0.5 H9 L4.5 4.8 Z" fill="#000"/></svg>
<div style="top:90.19px;font-size:11px;line-height:14px;left:404px;width:150px;text-align:right;letter-spacing:-0.12px;">Delivery Month</div>
<div style="left:557px;top:90px;width:83px;height:15px;background:#fff;border:1px solid #a5a5a5;box-sizing:border-box;"></div>
<div style="top:91.19px;font-size:11px;line-height:14px;left:560px;color:#000;letter-spacing:-0.12px;width:62px;overflow:hidden;">00/00/0000</div>
<div style="left:622px;top:90px;width:18px;height:15px;background:linear-gradient(#f6f6f6,#ececec 45%,#dcdcdc 50%,#d4d4d4);border:1px solid #6e6e6e;box-sizing:border-box;"></div>
<svg style="left:626.5px;top:98px;" width="9" height="5" viewBox="0 0 9 5"><path d="M0 0.5 H9 L4.5 4.8 Z" fill="#000"/></svg>
<div style="top:108.19px;font-size:11px;line-height:14px;left:404px;width:150px;text-align:right;letter-spacing:-0.12px;">Product Class</div>
<div style="left:557px;top:108px;width:96px;height:15px;background:#fff;border:1px solid #a5a5a5;box-sizing:border-box;"></div>
<div style="top:109.19px;font-size:11px;line-height:14px;left:560px;color:#000;letter-spacing:-0.12px;width:74px;overflow:hidden;">Natural Gas</div>
<div style="left:634px;top:108px;width:19px;height:15px;background:linear-gradient(#f6f6f6,#ececec 45%,#dcdcdc 50%,#d4d4d4);border:1px solid #6e6e6e;box-sizing:border-box;"></div>
<svg style="left:639.0px;top:116px;" width="9" height="5" viewBox="0 0 9 5"><path d="M0 0.5 H9 L4.5 4.8 Z" fill="#000"/></svg>
<div style="top:126.19px;font-size:11px;line-height:14px;left:404px;width:150px;text-align:right;letter-spacing:-0.12px;">Deal Source</div>
<div style="left:557px;top:126px;width:96px;height:15px;background:#fff;border:1px solid #a5a5a5;box-sizing:border-box;"></div>
<div style="left:634px;top:126px;width:19px;height:15px;background:linear-gradient(#f6f6f6,#ececec 45%,#dcdcdc 50%,#d4d4d4);border:1px solid #6e6e6e;box-sizing:border-box;"></div>
<svg style="left:639.0px;top:134px;" width="9" height="5" viewBox="0 0 9 5"><path d="M0 0.5 H9 L4.5 4.8 Z" fill="#000"/></svg>
<div style="top:90.19px;font-size:11px;line-height:14px;left:572px;width:150px;text-align:right;letter-spacing:-0.12px;">Deal Descr</div>
<div style="left:726px;top:90px;width:143px;height:14px;background:#fff;border:1px solid #a5a5a5;box-sizing:border-box;"></div>
<div style="top:108.19px;font-size:11px;line-height:14px;left:572px;width:150px;text-align:right;letter-spacing:-0.12px;">Facility</div>
<div style="left:726px;top:108px;width:142px;height:15px;background:#fff;border:1px solid #a5a5a5;box-sizing:border-box;"></div>
<div style="left:849px;top:108px;width:19px;height:15px;background:linear-gradient(#f6f6f6,#ececec 45%,#dcdcdc 50%,#d4d4d4);border:1px solid #6e6e6e;box-sizing:border-box;"></div>
<svg style="left:854.0px;top:116px;" width="9" height="5" viewBox="0 0 9 5"><path d="M0 0.5 H9 L4.5 4.8 Z" fill="#000"/></svg>
<div style="top:126.19px;font-size:11px;line-height:14px;left:572px;width:150px;text-align:right;letter-spacing:-0.12px;">Type Descr</div>
<div style="left:726px;top:126px;width:158px;height:14px;background:#fff;border:1px solid #a5a5a5;box-sizing:border-box;"></div>
<div style="top:91.19px;font-size:11px;line-height:14px;left:761px;width:150px;text-align:right;letter-spacing:-0.12px;">Buyer</div>
<div style="left:913px;top:90px;width:63px;height:15px;background:#fff;border:1px solid #a5a5a5;box-sizing:border-box;"></div>
<div style="left:957px;top:90px;width:19px;height:15px;background:linear-gradient(#f6f6f6,#ececec 45%,#dcdcdc 50%,#d4d4d4);border:1px solid #6e6e6e;box-sizing:border-box;"></div>
<svg style="left:962.0px;top:98px;" width="9" height="5" viewBox="0 0 9 5"><path d="M0 0.5 H9 L4.5 4.8 Z" fill="#000"/></svg>
<div style="left:978px;top:90px;width:129px;height:14px;background:#fff;border:1px solid #a5a5a5;box-sizing:border-box;"></div>
<div style="top:109.19px;font-size:11px;line-height:14px;left:761px;width:150px;text-align:right;letter-spacing:-0.12px;">Seller</div>
<div style="left:913px;top:108px;width:63px;height:15px;background:#fff;border:1px solid #a5a5a5;box-sizing:border-box;"></div>
<div style="left:957px;top:108px;width:19px;height:15px;background:linear-gradient(#f6f6f6,#ececec 45%,#dcdcdc 50%,#d4d4d4);border:1px solid #6e6e6e;box-sizing:border-box;"></div>
<svg style="left:962.0px;top:116px;" width="9" height="5" viewBox="0 0 9 5"><path d="M0 0.5 H9 L4.5 4.8 Z" fill="#000"/></svg>
<div style="left:978px;top:108px;width:129px;height:14px;background:#fff;border:1px solid #a5a5a5;box-sizing:border-box;"></div>
<div style="top:127.19px;font-size:11px;line-height:14px;left:772px;width:150px;text-align:right;letter-spacing:-0.12px;">Broker</div>
<div style="left:925px;top:128px;width:12px;height:12px;background:linear-gradient(135deg,#e0e0e0,#fafafa);border:1px solid #8a8a8a;box-sizing:border-box;"></div>
<div style="top:90.19px;font-size:11px;line-height:14px;left:993px;width:150px;text-align:right;letter-spacing:-0.12px;">K #</div>
<div style="left:1146px;top:90px;width:75px;height:15px;background:#fff;border:1px solid #a5a5a5;box-sizing:border-box;"></div>
<div style="left:1202px;top:90px;width:19px;height:15px;background:linear-gradient(#f6f6f6,#ececec 45%,#dcdcdc 50%,#d4d4d4);border:1px solid #6e6e6e;box-sizing:border-box;"></div>
<svg style="left:1207.0px;top:98px;" width="9" height="5" viewBox="0 0 9 5"><path d="M0 0.5 H9 L4.5 4.8 Z" fill="#000"/></svg>
<div style="top:108.19px;font-size:11px;line-height:14px;left:993px;width:150px;text-align:right;letter-spacing:-0.12px;">K #</div>
<div style="left:1146px;top:108px;width:75px;height:15px;background:#fff;border:1px solid #a5a5a5;box-sizing:border-box;"></div>
<div style="left:1202px;top:108px;width:19px;height:15px;background:linear-gradient(#f6f6f6,#ececec 45%,#dcdcdc 50%,#d4d4d4);border:1px solid #6e6e6e;box-sizing:border-box;"></div>
<svg style="left:1207.0px;top:116px;" width="9" height="5" viewBox="0 0 9 5"><path d="M0 0.5 H9 L4.5 4.8 Z" fill="#000"/></svg>
<div style="left:1231px;top:85px;width:1px;height:75px;background:#a0a0a0;"></div>
<div style="left:1231px;top:85px;width:53px;height:23px;background:#fff;border:1px solid #a0a0a0;border-left:none;border-top:none;box-sizing:border-box;"></div>
<div style="top:90.03px;font-size:10px;line-height:13px;left:1240px;letter-spacing:-0.12px;">Criteria 1</div>
<div style="left:1231px;top:108px;width:51px;height:18px;background:linear-gradient(90deg,#d8d8d8,#ececec 70%,#f4f4f4);border:1px solid #a0a0a0;box-sizing:border-box;"></div>
<div style="top:110.03px;font-size:10px;line-height:13px;left:1238px;letter-spacing:-0.12px;">Criteria 2</div>
<div style="left:312px;top:160px;width:1282px;height:1px;background:#a0a0a0;"></div>
<div style="left:386px;top:161px;width:1px;height:15px;background:#e8e8e8;"></div>
<div style="left:506px;top:161px;width:1px;height:15px;background:#e8e8e8;"></div>
<div style="left:564px;top:161px;width:1px;height:15px;background:#e8e8e8;"></div>
<div style="left:601px;top:161px;width:1px;height:15px;background:#e8e8e8;"></div>
<div style="left:732px;top:161px;width:1px;height:15px;background:#e8e8e8;"></div>
<div style="left:312px;top:175px;width:523px;height:961px;background:#f0f0f0;border-right:2px solid #707070;border-bottom:2px solid #707070;box-sizing:border-box;"></div>
<div style="left:312px;top:175px;width:523px;height:1px;background:#e0e0e0;"></div>
<div style="left:320px;top:183px;width:508px;height:925px;background:#fff;"></div>
<div style="top:185.19px;font-size:11px;line-height:14px;left:310.0px;width:87px;text-align:center;letter-spacing:-0.12px;">Deal Type</div>
<div style="left:321px;top:199px;width:66px;height:1px;background:#000;"></div>
<div style="top:185.19px;font-size:11px;line-height:14px;left:378.0px;width:140px;text-align:center;letter-spacing:-0.12px;">Facility</div>
<div style="left:389px;top:199px;width:119px;height:1px;background:#000;"></div>
<div style="left:388px;top:183px;width:1px;height:16px;background:#e0e0e0;"></div>
<div style="top:185.19px;font-size:11px;line-height:14px;left:499.0px;width:76px;text-align:center;letter-spacing:-0.12px;">Contract #</div>
<div style="left:510px;top:199px;width:55px;height:1px;background:#000;"></div>
<div style="left:509px;top:183px;width:1px;height:16px;background:#e0e0e0;"></div>
<div style="top:185.19px;font-size:11px;line-height:14px;left:556.0px;width:55px;text-align:center;letter-spacing:-0.12px;">New K</div>
<div style="left:567px;top:199px;width:34px;height:1px;background:#000;"></div>
<div style="left:566px;top:183px;width:1px;height:16px;background:#e0e0e0;"></div>
<div style="top:185.19px;font-size:11px;line-height:14px;left:592.0px;width:150px;text-align:center;letter-spacing:-0.12px;">Primary Party Name</div>
<div style="left:603px;top:199px;width:129px;height:1px;background:#000;"></div>
<div style="left:602px;top:183px;width:1px;height:16px;background:#e0e0e0;"></div>
<div style="top:185.19px;font-size:11px;line-height:14px;left:723.0px;width:114px;text-align:center;letter-spacing:-0.12px;">Secondary Party</div>
<div style="left:734px;top:199px;width:93px;height:1px;background:#000;"></div>
<div style="left:733px;top:183px;width:1px;height:16px;background:#e0e0e0;"></div>
<div style="left:320px;top:201px;width:508px;height:14px;background:#f6f6f6;border-top:1px solid #ededed;border-bottom:1px solid #ededed;box-sizing:border-box;"></div>
<div style="top:201.69px;font-size:11px;line-height:14px;left:322px;color:#000;letter-spacing:-0.12px;width:66px;overflow:hidden;">Transport</div>
<div style="left:388px;top:201px;width:1px;height:14px;background:#e8e8e8;"></div>
<div style="top:201.69px;font-size:11px;line-height:14px;left:389px;color:#000;letter-spacing:-0.12px;width:120px;overflow:hidden;">Tennessee Gas Pipeline</div>
<div style="left:509px;top:201px;width:1px;height:14px;background:#e8e8e8;"></div>
<div style="left:566px;top:201px;width:1px;height:14px;background:#e8e8e8;"></div>
<div style="left:602px;top:201px;width:1px;height:14px;background:#e8e8e8;"></div>
<div style="left:733px;top:201px;width:1px;height:14px;background:#e8e8e8;"></div>
<div style="top:215.69px;font-size:11px;line-height:14px;left:322px;color:#000;letter-spacing:-0.12px;width:66px;overflow:hidden;">Buy/Transpor</div>
<div style="left:388px;top:215px;width:1px;height:14px;background:#e8e8e8;"></div>
<div style="top:215.69px;font-size:11px;line-height:14px;left:389px;color:#000;letter-spacing:-0.12px;width:120px;overflow:hidden;">Tennessee Gas Pipeline</div>
<div style="left:509px;top:215px;width:1px;height:14px;background:#e8e8e8;"></div>
<div style="top:215.69px;font-size:11px;line-height:14px;left:510px;color:#000;letter-spacing:-0.12px;width:56px;overflow:hidden;">PUR00082</div>
<div style="left:566px;top:215px;width:1px;height:14px;background:#e8e8e8;"></div>
<div style="top:215.69px;font-size:11px;line-height:14px;left:567px;color:#000;letter-spacing:-0.12px;width:35px;overflow:hidden;">No</div>
<div style="left:602px;top:215px;width:1px;height:14px;background:#e8e8e8;"></div>
<div style="top:215.69px;font-size:11px;line-height:14px;left:603px;color:#000;letter-spacing:-0.12px;width:130px;overflow:hidden;">Crosstex Energy Services,</div>
<div style="left:733px;top:215px;width:1px;height:14px;background:#e8e8e8;"></div>
<div style="top:215.69px;font-size:11px;line-height:14px;left:734px;color:#000;letter-spacing:-0.12px;width:94px;overflow:hidden;">Encina Gas Marketi</div>
<div style="left:320px;top:229px;width:508px;height:14px;background:#f6f6f6;border-top:1px solid #ededed;border-bottom:1px solid #ededed;box-sizing:border-box;"></div>
<div style="top:229.69px;font-size:11px;line-height:14px;left:322px;color:#000;letter-spacing:-0.12px;width:66px;overflow:hidden;">Buy/Transpor</div>
<div style="left:388px;top:229px;width:1px;height:14px;background:#e8e8e8;"></div>
<div style="top:229.69px;font-size:11px;line-height:14px;left:389px;color:#000;letter-spacing:-0.12px;width:120px;overflow:hidden;">Tennessee Gas Pipeline</div>
<div style="left:509px;top:229px;width:1px;height:14px;background:#e8e8e8;"></div>
<div style="top:229.69px;font-size:11px;line-height:14px;left:510px;color:#000;letter-spacing:-0.12px;width:56px;overflow:hidden;">PUR00168</div>
<div style="left:566px;top:229px;width:1px;height:14px;background:#e8e8e8;"></div>
<div style="top:229.69px;font-size:11px;line-height:14px;left:567px;color:#000;letter-spacing:-0.12px;width:35px;overflow:hidden;">No</div>
<div style="left:602px;top:229px;width:1px;height:14px;background:#e8e8e8;"></div>
<div style="top:229.69px;font-size:11px;line-height:14px;left:603px;color:#000;letter-spacing:-0.12px;width:130px;overflow:hidden;">Crosstex Energy Services,</div>
<div style="left:733px;top:229px;width:1px;height:14px;background:#e8e8e8;"></div>
<div style="top:229.69px;font-size:11px;line-height:14px;left:734px;color:#000;letter-spacing:-0.12px;width:94px;overflow:hidden;">Producers Energy I</div>
<div style="top:243.69px;font-size:11px;line-height:14px;left:322px;color:#000;letter-spacing:-0.12px;width:66px;overflow:hidden;">Transport</div>
<div style="left:388px;top:243px;width:1px;height:14px;background:#e8e8e8;"></div>
<div style="top:243.69px;font-size:11px;line-height:14px;left:389px;color:#000;letter-spacing:-0.12px;width:120px;overflow:hidden;">Tennessee Gas Pipeline</div>
<div style="left:509px;top:243px;width:1px;height:14px;background:#e8e8e8;"></div>
<div style="left:566px;top:243px;width:1px;height:14px;background:#e8e8e8;"></div>
<div style="left:602px;top:243px;width:1px;height:14px;background:#e8e8e8;"></div>
<div style="left:733px;top:243px;width:1px;height:14px;background:#e8e8e8;"></div>
<div style="left:320px;top:257px;width:508px;height:14px;background:#f6f6f6;border-top:1px solid #ededed;border-bottom:1px solid #ededed;box-sizing:border-box;"></div>
<div style="top:257.69px;font-size:11px;line-height:14px;left:322px;color:#000;letter-spacing:-0.12px;width:66px;overflow:hidden;">Buy/Transpor</div>
<div style="left:388px;top:257px;width:1px;height:14px;background:#e8e8e8;"></div>
<div style="top:257.69px;font-size:11px;line-height:14px;left:389px;color:#000;letter-spacing:-0.12px;width:120px;overflow:hidden;">Tennessee Gas Pipeline</div>
<div style="left:509px;top:257px;width:1px;height:14px;background:#e8e8e8;"></div>
<div style="top:257.69px;font-size:11px;line-height:14px;left:510px;color:#000;letter-spacing:-0.12px;width:56px;overflow:hidden;">PUR00174</div>
<div style="left:566px;top:257px;width:1px;height:14px;background:#e8e8e8;"></div>
<div style="top:257.69px;font-size:11px;line-height:14px;left:567px;color:#000;letter-spacing:-0.12px;width:35px;overflow:hidden;">No</div>
<div style="left:602px;top:257px;width:1px;height:14px;background:#e8e8e8;"></div>
<div style="top:257.69px;font-size:11px;line-height:14px;left:603px;color:#000;letter-spacing:-0.12px;width:130px;overflow:hidden;">Crosstex Energy Services,</div>
<div style="left:733px;top:257px;width:1px;height:14px;background:#e8e8e8;"></div>
<div style="top:257.69px;font-size:11px;line-height:14px;left:734px;color:#000;letter-spacing:-0.12px;width:94px;overflow:hidden;">Enserch Energy Se</div>
<div style="top:271.69px;font-size:11px;line-height:14px;left:322px;color:#000;letter-spacing:-0.12px;width:66px;overflow:hidden;">Transport</div>
<div style="left:388px;top:271px;width:1px;height:14px;background:#e8e8e8;"></div>
<div style="top:271.69px;font-size:11px;line-height:14px;left:389px;color:#000;letter-spacing:-0.12px;width:120px;overflow:hidden;">Comstock Oil &amp; Gas Stat</div>
<div style="left:509px;top:271px;width:1px;height:14px;background:#e8e8e8;"></div>
<div style="left:566px;top:271px;width:1px;height:14px;background:#e8e8e8;"></div>
<div style="left:602px;top:271px;width:1px;height:14px;background:#e8e8e8;"></div>
<div style="left:733px;top:271px;width:1px;height:14px;background:#e8e8e8;"></div>
<div style="left:320px;top:285px;width:508px;height:14px;background:#3399ff;"></div>
<div style="top:285.69px;font-size:11px;line-height:14px;left:322px;color:#fff;letter-spacing:-0.12px;width:66px;overflow:hidden;">Transport</div>
<div style="left:388px;top:285px;width:1px;height:14px;background:#fff;"></div>
<div style="top:285.69px;font-size:11px;line-height:14px;left:389px;color:#fff;letter-spacing:-0.12px;width:120px;overflow:hidden;">Comstock Oil &amp; Gas Cros</div>
<div style="left:509px;top:285px;width:1px;height:14px;background:#fff;"></div>
<div style="left:566px;top:285px;width:1px;height:14px;background:#fff;"></div>
<div style="left:602px;top:285px;width:1px;height:14px;background:#fff;"></div>
<div style="left:733px;top:285px;width:1px;height:14px;background:#fff;"></div>
<div style="left:388px;top:285px;width:1px;height:14px;background:#fff;"></div>
<div style="left:509px;top:285px;width:1px;height:14px;background:#fff;"></div>
<div style="left:566px;top:285px;width:1px;height:14px;background:#fff;"></div>
<div style="left:602px;top:285px;width:1px;height:14px;background:#fff;"></div>
<div style="left:733px;top:285px;width:1px;height:14px;background:#fff;"></div>
<div style="top:299.69px;font-size:11px;line-height:14px;left:322px;color:#000;letter-spacing:-0.12px;width:66px;overflow:hidden;">Transport</div>
<div style="left:388px;top:299px;width:1px;height:14px;background:#e8e8e8;"></div>
<div style="top:299.69px;font-size:11px;line-height:14px;left:389px;color:#000;letter-spacing:-0.12px;width:120px;overflow:hidden;">Comstock Oil &amp; Gas Cros</div>
<div style="left:509px;top:299px;width:1px;height:14px;background:#e8e8e8;"></div>
<div style="left:566px;top:299px;width:1px;height:14px;background:#e8e8e8;"></div>
<div style="left:602px;top:299px;width:1px;height:14px;background:#e8e8e8;"></div>
<div style="left:733px;top:299px;width:1px;height:14px;background:#e8e8e8;"></div>
<div style="left:320px;top:313px;width:508px;height:14px;background:#f6f6f6;border-top:1px solid #ededed;border-bottom:1px solid #ededed;box-sizing:border-box;"></div>
<div style="top:313.69px;font-size:11px;line-height:14px;left:322px;color:#000;letter-spacing:-0.12px;width:66px;overflow:hidden;">Transport</div>
<div style="left:388px;top:313px;width:1px;height:14px;background:#e8e8e8;"></div>
<div style="top:313.69px;font-size:11px;line-height:14px;left:389px;color:#000;letter-spacing:-0.12px;width:120px;overflow:hidden;">Comstock Oil &amp; Gas Cros</div>
<div style="left:509px;top:313px;width:1px;height:14px;background:#e8e8e8;"></div>
<div style="left:566px;top:313px;width:1px;height:14px;background:#e8e8e8;"></div>
<div style="left:602px;top:313px;width:1px;height:14px;background:#e8e8e8;"></div>
<div style="left:733px;top:313px;width:1px;height:14px;background:#e8e8e8;"></div>
<div style="top:327.69px;font-size:11px;line-height:14px;left:322px;color:#000;letter-spacing:-0.12px;width:66px;overflow:hidden;">Transport</div>
<div style="left:388px;top:327px;width:1px;height:14px;background:#e8e8e8;"></div>
<div style="top:327.69px;font-size:11px;line-height:14px;left:389px;color:#000;letter-spacing:-0.12px;width:120px;overflow:hidden;">Comstock Oil &amp; Gas Cros</div>
<div style="left:509px;top:327px;width:1px;height:14px;background:#e8e8e8;"></div>
<div style="left:566px;top:327px;width:1px;height:14px;background:#e8e8e8;"></div>
<div style="left:602px;top:327px;width:1px;height:14px;background:#e8e8e8;"></div>
<div style="left:733px;top:327px;width:1px;height:14px;background:#e8e8e8;"></div>
<div style="left:320px;top:341px;width:508px;height:14px;background:#f6f6f6;border-top:1px solid #ededed;border-bottom:1px solid #ededed;box-sizing:border-box;"></div>
<div style="top:341.69px;font-size:11px;line-height:14px;left:322px;color:#000;letter-spacing:-0.12px;width:66px;overflow:hidden;">Sell</div>
<div style="left:388px;top:341px;width:1px;height:14px;background:#e8e8e8;"></div>
<div style="top:341.69px;font-size:11px;line-height:14px;left:389px;color:#000;letter-spacing:-0.12px;width:120px;overflow:hidden;">ANR Field Services Com</div>
<div style="left:509px;top:341px;width:1px;height:14px;background:#e8e8e8;"></div>
<div style="top:341.69px;font-size:11px;line-height:14px;left:510px;color:#000;letter-spacing:-0.12px;width:56px;overflow:hidden;">SLS00061</div>
<div style="left:566px;top:341px;width:1px;height:14px;background:#e8e8e8;"></div>
<div style="top:341.69px;font-size:11px;line-height:14px;left:567px;color:#000;letter-spacing:-0.12px;width:35px;overflow:hidden;">No</div>
<div style="left:602px;top:341px;width:1px;height:14px;background:#e8e8e8;"></div>
<div style="top:341.69px;font-size:11px;line-height:14px;left:603px;color:#000;letter-spacing:-0.12px;width:130px;overflow:hidden;">Crosstex Energy Services,</div>
<div style="left:733px;top:341px;width:1px;height:14px;background:#e8e8e8;"></div>
<div style="top:341.69px;font-size:11px;line-height:14px;left:734px;color:#000;letter-spacing:-0.12px;width:94px;overflow:hidden;">Stalwart Energy Co</div>
<div style="top:355.69px;font-size:11px;line-height:14px;left:322px;color:#000;letter-spacing:-0.12px;width:66px;overflow:hidden;">Transport</div>
<div style="left:388px;top:355px;width:1px;height:14px;background:#e8e8e8;"></div>
<div style="top:355.69px;font-size:11px;line-height:14px;left:389px;color:#000;letter-spacing:-0.12px;width:120px;overflow:hidden;">ANR Field Services Com</div>
<div style="left:509px;top:355px;width:1px;height:14px;background:#e8e8e8;"></div>
<div style="left:566px;top:355px;width:1px;height:14px;background:#e8e8e8;"></div>
<div style="left:602px;top:355px;width:1px;height:14px;background:#e8e8e8;"></div>
<div style="left:733px;top:355px;width:1px;height:14px;background:#e8e8e8;"></div>
<div style="left:320px;top:369px;width:508px;height:14px;background:#f6f6f6;border-top:1px solid #ededed;border-bottom:1px solid #ededed;box-sizing:border-box;"></div>
<div style="top:369.69px;font-size:11px;line-height:14px;left:322px;color:#000;letter-spacing:-0.12px;width:66px;overflow:hidden;">Buy/Transpor</div>
<div style="left:388px;top:369px;width:1px;height:14px;background:#e8e8e8;"></div>
<div style="top:369.69px;font-size:11px;line-height:14px;left:389px;color:#000;letter-spacing:-0.12px;width:120px;overflow:hidden;">ANR Field Services Com</div>
<div style="left:509px;top:369px;width:1px;height:14px;background:#e8e8e8;"></div>
<div style="top:369.69px;font-size:11px;line-height:14px;left:510px;color:#000;letter-spacing:-0.12px;width:56px;overflow:hidden;">PUR00190</div>
<div style="left:566px;top:369px;width:1px;height:14px;background:#e8e8e8;"></div>
<div style="top:369.69px;font-size:11px;line-height:14px;left:567px;color:#000;letter-spacing:-0.12px;width:35px;overflow:hidden;">No</div>
<div style="left:602px;top:369px;width:1px;height:14px;background:#e8e8e8;"></div>
<div style="top:369.69px;font-size:11px;line-height:14px;left:603px;color:#000;letter-spacing:-0.12px;width:130px;overflow:hidden;">Crosstex Energy Services,</div>
<div style="left:733px;top:369px;width:1px;height:14px;background:#e8e8e8;"></div>
<div style="top:369.69px;font-size:11px;line-height:14px;left:734px;color:#000;letter-spacing:-0.12px;width:94px;overflow:hidden;">Rosewood Resour</div>
<div style="top:383.69px;font-size:11px;line-height:14px;left:322px;color:#000;letter-spacing:-0.12px;width:66px;overflow:hidden;">Transport</div>
<div style="left:388px;top:383px;width:1px;height:14px;background:#e8e8e8;"></div>
<div style="top:383.69px;font-size:11px;line-height:14px;left:389px;color:#000;letter-spacing:-0.12px;width:120px;overflow:hidden;">ANR Field Services Com</div>
<div style="left:509px;top:383px;width:1px;height:14px;background:#e8e8e8;"></div>
<div style="left:566px;top:383px;width:1px;height:14px;background:#e8e8e8;"></div>
<div style="left:602px;top:383px;width:1px;height:14px;background:#e8e8e8;"></div>
<div style="left:733px;top:383px;width:1px;height:14px;background:#e8e8e8;"></div>
<div style="left:320px;top:1110px;width:508px;height:17px;background:#ececec;"></div>
<div style="left:320px;top:1110px;width:10px;height:17px;background:#707070;"></div>
<svg style="left:334px;top:1114px;" width="6" height="9" viewBox="0 0 6 9"><path d="M5 0.5 V8.5 L0.5 4.5 Z" fill="#404040"/></svg>
<div style="left:348px;top:1111px;width:91px;height:14px;background:linear-gradient(#f6f6f6,#dcdcdc);border:1px solid #9a9a9a;border-radius:2px;box-sizing:border-box;"></div>
<svg style="left:389px;top:1114px;" width="9" height="8" viewBox="0 0 9 8"><path d="M1.5 0 V8 M4.5 0 V8 M7.5 0 V8" stroke="#505050"/></svg>
<svg style="left:816px;top:1114px;" width="6" height="9" viewBox="0 0 6 9"><path d="M0.5 0.5 V8.5 L5 4.5 Z" fill="#404040"/></svg>
<div style="left:312px;top:1136px;width:1283px;height:1px;background:#8a8a8a;"></div>
<div style="left:314px;top:1136px;width:104px;height:24px;background:linear-gradient(#eaeaea,#d6d6d6 50%,#e8e8e8);border:1px solid #a0a0a0;border-top:none;box-sizing:border-box;"></div>
<svg style="left:320px;top:1140px;" width="16" height="16" viewBox="0 0 16 16"><rect x="0.5" y="0.5" width="14" height="14" fill="#f0f6ff" stroke="#6a5a30"/><rect x="0.5" y="0.5" width="14" height="2" fill="#4a80d0"/><path d="M3 5 H12 M3 7.5 H12 M3 10 H12 M3 12.5 H10" stroke="#3a60a0"/></svg>
<div style="top:1141.19px;font-size:11px;line-height:14px;left:338px;letter-spacing:-0.12px;">Deals Results</div>
<div style="left:417px;top:1135px;width:61px;height:27px;background:#fff;border:1px solid #a0a0a0;border-top:none;box-sizing:border-box;"></div>
<div style="top:1143.19px;font-size:11px;line-height:14px;left:425px;color:#1010e0;font-weight:bold;letter-spacing:0.3px;">Legs (3)</div>
<div style="left:478px;top:1136px;width:42px;height:23px;background:linear-gradient(#f0f0f0,#dadada);border:1px solid #a0a0a0;border-top:none;box-sizing:border-box;"></div>
<svg style="left:483px;top:1140px;" width="16" height="16" viewBox="0 0 16 16"><path d="M1.5 0.5 H3 V15.5 H1.5 Z" fill="#c87030"/><path d="M3 3 H10 V14 H3Z" fill="#f4f4f4" stroke="#8a8a8a"/><path d="M5 14 L13 5 L15 7 L7 15 Z" fill="#f0c860" stroke="#b08030"/></svg>
<div style="top:1141.19px;font-size:11px;line-height:14px;left:500px;color:#101090;letter-spacing:-0.12px;">(0)</div>
<div style="left:521px;top:1136px;width:42px;height:23px;background:linear-gradient(#f0f0f0,#dadada);border:1px solid #a0a0a0;border-top:none;box-sizing:border-box;"></div>
<svg style="left:528px;top:1140px;" width="14" height="16" viewBox="0 0 14 16"><rect x="1" y="2" width="8" height="13" fill="#f8f020" stroke="#303030"/><path d="M3 6 H8 M3 9 H8 M3 12 H8" stroke="#303030"/><rect x="10" y="0" width="2" height="16" fill="#303030"/></svg>
<div style="top:1141.19px;font-size:11px;line-height:14px;left:544px;color:#101090;letter-spacing:-0.12px;">(0)</div>
<div style="left:312px;top:1162px;width:1283px;height:1px;background:#a0a0a0;"></div>
<div style="left:0px;top:1163px;width:1600px;height:4px;background:#f0f2f8;"></div>
<div style="left:1px;top:1167px;width:1599px;height:26px;background:#e4e2dc;border:1px solid #a0a0a0;box-sizing:border-box;"></div>
<svg style="left:7px;top:1173px;" width="14" height="14" viewBox="0 0 14 14"><rect x="0.5" y="0.5" width="13" height="13" fill="#f8f8f0" stroke="#6a6a5a"/><rect x="9.5" y="0.5" width="4" height="13" fill="#e8e0b0" stroke="#6a6a5a"/><path d="M2 3 H8 M2 5.5 H8 M2 8 H8 M2 10.5 H8" stroke="#404040"/></svg>
<div style="top:1173.19px;font-size:11px;line-height:14px;left:24px;color:#1a1a2a;letter-spacing:-0.12px;">Output Messages</div>
<div style="left:0px;top:1193px;width:1600px;height:7px;background:#fdfdfd;"></div>
<div style="left:1594px;top:160px;width:1px;height:975px;background:#a0a0a0;"></div>
<div style="left:841px;top:166px;width:164px;height:25px;background:linear-gradient(#f4f4f4,#e4e4e4 45%,#d2d2d2 55%,#dedede);border:1px solid #9a9a9a;box-sizing:border-box;"></div>
<div style="left:1147px;top:166px;width:160px;height:25px;background:linear-gradient(#f4f4f4,#e4e4e4 45%,#d2d2d2 55%,#dedede);border:1px solid #9a9a9a;box-sizing:border-box;"></div>
<div style="left:1308px;top:166px;width:165px;height:25px;background:linear-gradient(#f4f4f4,#e4e4e4 45%,#d2d2d2 55%,#dedede);border:1px solid #9a9a9a;box-sizing:border-box;"></div>
<div style="top:171.19px;font-size:11px;line-height:14px;left:878px;letter-spacing:-0.12px;">Connected Buy</div>
<svg style="left:954px;top:169px;" width="16" height="15" viewBox="0 0 16 15"><path d="M1.5 14 L4 6 L4.5 3 L5 1.5" stroke="#000" stroke-width="1.3" fill="none"/><path d="M5 1.5 H8.5 L9 2.5 H12.5 L13 3 H14.5 L13 4 V10 H11 L10 9.5 H5.5 L5 8 Z" fill="#10c010" stroke="#000" stroke-width="1.1"/><path d="M6 3 L12 9 M12 3 L6 9" stroke="#c0ffc0" stroke-width="0.7" stroke-dasharray="1 1"/></svg>
<div style="top:171.19px;font-size:11px;line-height:14px;left:1182px;letter-spacing:-0.12px;">Delivery Ghost</div>
<svg style="left:1255px;top:169px;" width="16" height="15" viewBox="0 0 16 15"><path d="M1.5 14 L4 6 L4.5 3 L5 1.5" stroke="#000" stroke-width="1.3" fill="none"/><path d="M5 1.5 H8.5 L9 2.5 H12.5 L13 3 H14.5 L13 4 V10 H11 L10 9.5 H5.5 L5 8 Z" fill="#10c010" stroke="#000" stroke-width="1.1"/><path d="M6 3 L12 9 M12 3 L6 9" stroke="#c0ffc0" stroke-width="0.7" stroke-dasharray="1 1"/></svg>
<div style="top:171.19px;font-size:11px;line-height:14px;left:1345px;letter-spacing:-0.12px;">Receipt Ghosts</div>
<svg style="left:1420px;top:169px;" width="16" height="15" viewBox="0 0 16 15"><path d="M1.5 14 L4 6 L4.5 3 L5 1.5" stroke="#000" stroke-width="1.3" fill="none"/><path d="M5 1.5 H8.5 L9 2.5 H12.5 L13 3 H14.5 L13 4 V10 H11 L10 9.5 H5.5 L5 8 Z" fill="#10c010" stroke="#000" stroke-width="1.1"/><path d="M6 3 L12 9 M12 3 L6 9" stroke="#c0ffc0" stroke-width="0.7" stroke-dasharray="1 1"/></svg>
<div style="left:1474px;top:166px;width:116px;height:25px;background:#c8c8c8;border:1px solid #9a9a9a;box-sizing:border-box;"></div>
<div style="top:171.19px;font-size:11px;line-height:14px;left:1482.0px;width:100px;text-align:center;color:#f4f4f4;letter-spacing:-0.12px;">Add Sell</div>
<div style="left:1005px;top:164px;width:142px;height:27px;background:#fff;border:1px solid #9a9a9a;border-bottom:none;box-sizing:border-box;"></div>
<div style="top:169.19px;font-size:11px;line-height:14px;left:1006.0px;width:140px;text-align:center;color:#2020e0;letter-spacing:-0.12px;">Transport (3)</div>
<div style="left:839px;top:190px;width:751px;height:943px;border:1px solid #9a9a9a;border-top:none;box-sizing:border-box;"></div>
<div style="left:839px;top:190px;width:166px;height:1px;background:#9a9a9a;"></div>
<div style="left:1147px;top:190px;width:443px;height:1px;background:#9a9a9a;"></div>
<div style="left:1594px;top:160px;width:1px;height:977px;background:#9a9a9a;"></div>
<div style="left:312px;top:1136px;width:1283px;height:1px;background:#9a9a9a;"></div>
<div style="left:843px;top:219px;width:1px;height:910px;background:#9a9a9a;"></div>
<div style="left:843px;top:1128px;width:742px;height:1px;background:#9a9a9a;"></div>
<div style="left:844px;top:218px;width:742px;height:1px;background:#9a9a9a;"></div>
<div style="left:844px;top:220px;width:742px;height:1px;background:#9a9a9a;"></div>
<div style="left:843px;top:192px;width:44px;height:28px;background:#fff;border:1px solid #9a9a9a;border-bottom:none;box-sizing:border-box;"></div>
<div style="left:844px;top:218px;width:42px;height:2px;background:#fff;"></div>
<div style="top:197.19px;font-size:11px;line-height:14px;left:852px;color:#1818e0;font-weight:bold;letter-spacing:0.5px;">Legs</div>
<div style="left:887px;top:194px;width:87px;height:25px;background:linear-gradient(#f4f4f4,#e2e2e2 50%,#d4d4d4);border:1px solid #9a9a9a;border-bottom:none;box-sizing:border-box;"></div>
<div style="left:975px;top:194px;width:84px;height:25px;background:linear-gradient(#f4f4f4,#e2e2e2 50%,#d4d4d4);border:1px solid #9a9a9a;border-bottom:none;box-sizing:border-box;"></div>
<div style="left:1060px;top:194px;width:43px;height:25px;background:linear-gradient(#f4f4f4,#e2e2e2 50%,#d4d4d4);border:1px solid #9a9a9a;border-bottom:none;box-sizing:border-box;"></div>
<div style="left:1104px;top:194px;width:43px;height:25px;background:linear-gradient(#f4f4f4,#e2e2e2 50%,#d4d4d4);border:1px solid #9a9a9a;border-bottom:none;box-sizing:border-box;"></div>
<div style="left:1148px;top:194px;width:73px;height:25px;background:linear-gradient(#f4f4f4,#e2e2e2 50%,#d4d4d4);border:1px solid #9a9a9a;border-bottom:none;box-sizing:border-box;"></div>
<svg style="left:891px;top:200px;" width="17" height="16" viewBox="0 0 17 16"><rect x="1" y="1" width="15" height="12" fill="#fff" stroke="#000" stroke-width="1.5"/><text x="3" y="7" font-size="6" fill="#e00000" font-family="Liberation Sans">1 2</text><rect x="5" y="7" width="7" height="8" fill="#fff" stroke="#f0f000" stroke-width="1.5"/><path d="M7 12 L9 10" stroke="#e00000"/></svg>
<div style="top:199.19px;font-size:11px;line-height:14px;left:909px;color:#101080;letter-spacing:-0.12px;">Dailies (31)</div>
<svg style="left:979px;top:197px;" width="17" height="18" viewBox="0 0 17 18"><circle cx="8.5" cy="9" r="7.5" fill="#f0c020" stroke="#806010"/><text x="4.5" y="14" font-size="13" font-weight="bold" fill="#302000" font-family="Liberation Sans">$</text></svg>
<div style="top:199.19px;font-size:11px;line-height:14px;left:998px;color:#101080;letter-spacing:-0.12px;">Pricing (0)</div>
<svg style="left:1066px;top:199px;" width="16" height="16" viewBox="0 0 16 16"><path d="M1.5 0.5 H3 V15.5 H1.5 Z" fill="#c87030"/><path d="M3 3 H10 V14 H3Z" fill="#f4f4f4" stroke="#8a8a8a"/><path d="M5 14 L13 5 L15 7 L7 15 Z" fill="#f0c860" stroke="#b08030"/></svg>
<div style="top:199.19px;font-size:11px;line-height:14px;left:1083px;color:#101080;letter-spacing:-0.12px;">(0)</div>
<svg style="left:1111px;top:199px;" width="14" height="16" viewBox="0 0 14 16"><rect x="1" y="2" width="8" height="13" fill="#f8f020" stroke="#303030"/><path d="M3 6 H8 M3 9 H8 M3 12 H8" stroke="#303030"/><rect x="10" y="0" width="2" height="16" fill="#303030"/></svg>
<div style="top:199.19px;font-size:11px;line-height:14px;left:1127px;color:#101080;letter-spacing:-0.12px;">(0)</div>
<svg style="left:1155px;top:198px;" width="14" height="16" viewBox="0 0 14 16"><rect x="0.5" y="1.5" width="13" height="14" fill="#f8f0b0" stroke="#806a20"/><path d="M2 1 V3 M4 1 V3 M6 1 V3 M8 1 V3 M10 1 V3" stroke="#606060"/><path d="M3 6 H11 M3 9 H11 M3 12 H9" stroke="#606060"/></svg>
<div style="top:199.19px;font-size:11px;line-height:14px;left:1170px;color:#101080;letter-spacing:-0.12px;">Type (0)</div>
<div style="top:226.03px;font-size:10px;line-height:13px;left:828px;width:60px;text-align:right;font-style:italic;letter-spacing:-0.2px;">K Type</div>
<div style="left:889px;top:225px;width:57px;height:16px;background:#f0f0f0;border:1px solid #a5a5a5;box-sizing:border-box;"></div>
<div style="top:226.71px;font-size:9.5px;line-height:12px;left:890px;color:#0000ff;font-style:italic;text-decoration:underline;letter-spacing:-0.12px;width:55px;overflow:hidden;">BSL</div>
<div style="top:226.03px;font-size:10px;line-height:13px;left:925px;width:60px;text-align:right;font-style:italic;letter-spacing:-0.5px;">Shipper</div>
<div style="left:989px;top:225px;width:108px;height:16px;background:#f0f0f0;border:1px solid #a5a5a5;box-sizing:border-box;"></div>
<div style="top:226.71px;font-size:9.5px;line-height:12px;left:990px;color:#0000ff;font-style:italic;text-decoration:underline;letter-spacing:-0.12px;width:106px;overflow:hidden;">Crosstex Energy Servi...</div>
<div style="top:226.03px;font-size:10px;line-height:13px;left:1072px;width:80px;text-align:right;font-style:italic;letter-spacing:-0.55px;">Transporter</div>
<div style="left:1156px;top:225px;width:107px;height:16px;background:#f0f0f0;border:1px solid #a5a5a5;box-sizing:border-box;"></div>
<div style="top:226.71px;font-size:9.5px;line-height:12px;left:1157px;color:#0000ff;font-style:italic;text-decoration:underline;letter-spacing:-0.12px;width:105px;overflow:hidden;">Comstock Oil and Gas</div>
<div style="top:226.03px;font-size:10px;line-height:13px;left:1252px;width:60px;text-align:right;font-style:italic;letter-spacing:-0.5px;">Tran K #</div>
<div style="left:1314px;top:225px;width:103px;height:16px;background:#f0f0f0;border:1px solid #a5a5a5;box-sizing:border-box;"></div>
<div style="top:231.19px;font-size:11px;line-height:14px;left:1421.0px;width:80px;text-align:center;text-decoration:underline;letter-spacing:-0.12px;">Leg Status</div>
<div style="top:225.71px;font-size:9.5px;line-height:12px;left:1552.0px;width:40px;text-align:center;font-weight:bold;">Main</div>
<div style="left:1554px;top:242px;width:33px;height:19px;background:linear-gradient(90deg,#d6d6d6,#dadada 70%,#eeeeee 72%,#f0f0f0);border-top:1px solid #9a9a9a;border-bottom:2px solid #80808a;box-sizing:border-box;"></div>
<div style="top:244.71px;font-size:9.5px;line-height:12px;left:1553.0px;width:34px;text-align:center;letter-spacing:-0.12px;">Addl.</div>
<div style="left:1554px;top:261px;width:33px;height:19px;background:linear-gradient(90deg,#d6d6d6,#dadada 70%,#eeeeee 72%,#f0f0f0);border-top:1px solid #9a9a9a;border-bottom:2px solid #80808a;box-sizing:border-box;"></div>
<div style="top:263.71px;font-size:9.5px;line-height:12px;left:1553.0px;width:34px;text-align:center;letter-spacing:-0.12px;">Nom</div>
<div style="left:1554px;top:280px;width:33px;height:19px;background:linear-gradient(90deg,#d6d6d6,#dadada 70%,#eeeeee 72%,#f0f0f0);border-top:1px solid #9a9a9a;border-bottom:2px solid #80808a;box-sizing:border-box;"></div>
<div style="top:282.71px;font-size:9.5px;line-height:12px;left:1553.0px;width:34px;text-align:center;letter-spacing:-0.12px;">Risk</div>
<div style="left:1553px;top:242px;width:1px;height:286px;background:#9a9a9a;"></div>
<div style="left:1549px;top:527px;width:5px;height:1px;background:#9a9a9a;"></div>
<div style="top:249.19px;font-size:11px;line-height:14px;left:823px;width:80px;text-align:right;color:#0000ff;letter-spacing:-0.12px;">Leg Facility</div>
<div style="left:907px;top:248px;width:139px;height:15px;background:#fff;border:1px solid #a5a5a5;box-sizing:border-box;"></div>
<div style="top:249.19px;font-size:11px;line-height:14px;left:910px;color:#000;letter-spacing:-0.12px;width:116px;overflow:hidden;">Comstock Oil &amp; Gas Cros</div>
<div style="left:1026px;top:248px;width:20px;height:15px;background:linear-gradient(#f6f6f6,#ececec 45%,#dcdcdc 50%,#d4d4d4);border:1px solid #6e6e6e;box-sizing:border-box;"></div>
<svg style="left:1031.5px;top:256px;" width="9" height="5" viewBox="0 0 9 5"><path d="M0 0.5 H9 L4.5 4.8 Z" fill="#000"/></svg>
<div style="top:266.19px;font-size:11px;line-height:14px;left:823px;width:80px;text-align:right;letter-spacing:-0.12px;">IC Facility</div>
<div style="left:907px;top:265px;width:118px;height:15px;background:#fff;border:1px solid #a5a5a5;box-sizing:border-box;"></div>
<div style="top:266.19px;font-size:11px;line-height:14px;left:910px;color:#0000ff;text-decoration:underline;letter-spacing:-0.12px;width:95px;overflow:hidden;">Crosstex Pipeline Compar</div>
<div style="left:1005px;top:265px;width:20px;height:15px;background:linear-gradient(#f6f6f6,#ececec 45%,#dcdcdc 50%,#d4d4d4);border:1px solid #6e6e6e;box-sizing:border-box;"></div>
<svg style="left:1010.5px;top:273px;" width="9" height="5" viewBox="0 0 9 5"><path d="M0 0.5 H9 L4.5 4.8 Z" fill="#000"/></svg>
<div style="left:1027px;top:265px;width:19px;height:15px;background:linear-gradient(#fafafa,#dcdcdc);border:1px solid #8a8a8a;box-sizing:border-box;"></div>
<svg style="left:1030px;top:268px;" width="12" height="10" viewBox="0 0 12 10"><rect x="0" y="4" width="5.5" height="6" fill="#303030"/><rect x="6.5" y="4" width="5.5" height="6" fill="#303030"/><rect x="1" y="0.5" width="3.5" height="4" fill="#505050"/><rect x="7.5" y="0.5" width="3.5" height="4" fill="#505050"/><rect x="1" y="6" width="3.5" height="2" fill="#a0a0a0"/><rect x="7.5" y="6" width="3.5" height="2" fill="#a0a0a0"/></svg>
<div style="top:283.19px;font-size:11px;line-height:14px;left:823px;width:80px;text-align:right;color:#0000ff;text-decoration:underline;letter-spacing:-0.12px;">Contract #</div>
<div style="left:907px;top:284px;width:82px;height:15px;background:#fff;border:1px solid #a5a5a5;box-sizing:border-box;"></div>
<div style="top:285.19px;font-size:11px;line-height:14px;left:910px;color:#000;letter-spacing:-0.12px;width:59px;overflow:hidden;">TRN00017</div>
<div style="left:969px;top:284px;width:20px;height:15px;background:linear-gradient(#f6f6f6,#ececec 45%,#dcdcdc 50%,#d4d4d4);border:1px solid #6e6e6e;box-sizing:border-box;"></div>
<svg style="left:974.5px;top:292px;" width="9" height="5" viewBox="0 0 9 5"><path d="M0 0.5 H9 L4.5 4.8 Z" fill="#000"/></svg>
<div style="top:249.19px;font-size:11px;line-height:14px;left:1020px;width:60px;text-align:right;color:#0000ff;letter-spacing:-0.12px;">Rct Pt</div>
<div style="left:1083px;top:248px;width:85px;height:15px;background:#fff;border:1px solid #a5a5a5;box-sizing:border-box;"></div>
<div style="top:249.19px;font-size:11px;line-height:14px;left:1086px;color:#000;letter-spacing:-0.12px;width:63px;overflow:hidden;">COGFAULCONERTIE</div>
<div style="left:1149px;top:248px;width:19px;height:15px;background:linear-gradient(#f6f6f6,#ececec 45%,#dcdcdc 50%,#d4d4d4);border:1px solid #6e6e6e;box-sizing:border-box;"></div>
<svg style="left:1154.0px;top:256px;" width="9" height="5" viewBox="0 0 9 5"><path d="M0 0.5 H9 L4.5 4.8 Z" fill="#000"/></svg>
<div style="top:266.19px;font-size:11px;line-height:14px;left:1020px;width:60px;text-align:right;color:#0000ff;letter-spacing:-0.12px;">Del Pt</div>
<div style="left:1083px;top:265px;width:85px;height:15px;background:#fff;border:1px solid #a5a5a5;box-sizing:border-box;"></div>
<div style="top:266.19px;font-size:11px;line-height:14px;left:1086px;color:#000;letter-spacing:-0.12px;width:63px;overflow:hidden;">Faulconer-COG</div>
<div style="left:1149px;top:265px;width:19px;height:15px;background:linear-gradient(#f6f6f6,#ececec 45%,#dcdcdc 50%,#d4d4d4);border:1px solid #6e6e6e;box-sizing:border-box;"></div>
<svg style="left:1154.0px;top:273px;" width="9" height="5" viewBox="0 0 9 5"><path d="M0 0.5 H9 L4.5 4.8 Z" fill="#000"/></svg>
<div style="top:284.19px;font-size:11px;line-height:14px;left:1020px;width:60px;text-align:right;letter-spacing:-0.12px;">IC Rct Pt</div>
<div style="left:1083px;top:284px;width:85px;height:15px;background:#f0f0f0;border:1px solid #a5a5a5;box-sizing:border-box;"></div>
<div style="top:285.19px;font-size:11px;line-height:14px;left:1084px;color:#0000ff;text-decoration:underline;letter-spacing:-0.12px;width:83px;overflow:hidden;">Faulconer100-...</div>
<div style="left:1170px;top:248px;width:145px;height:15px;background:#f0f0f0;border:1px solid #a5a5a5;box-sizing:border-box;"></div>
<div style="top:249.19px;font-size:11px;line-height:14px;left:1171px;color:#0000ff;text-decoration:underline;letter-spacing:-0.12px;width:143px;overflow:hidden;">HUGGS</div>
<div style="left:1170px;top:265px;width:145px;height:15px;background:#f0f0f0;border:1px solid #a5a5a5;box-sizing:border-box;"></div>
<div style="top:266.19px;font-size:11px;line-height:14px;left:1171px;color:#0000ff;text-decoration:underline;letter-spacing:-0.12px;width:143px;overflow:hidden;">FAULCONER-COG COMP O...</div>
<div style="left:1170px;top:284px;width:145px;height:15px;background:#f0f0f0;border:1px solid #a5a5a5;box-sizing:border-box;"></div>
<div style="top:285.19px;font-size:11px;line-height:14px;left:1171px;color:#000;letter-spacing:-0.12px;width:143px;overflow:hidden;">FAULCONER100-103</div>
<div style="left:1317px;top:248px;width:53px;height:15px;background:#f0f0f0;border:1px solid #a5a5a5;box-sizing:border-box;"></div>
<div style="top:249.19px;font-size:11px;line-height:14px;left:1318px;color:#000;letter-spacing:-0.12px;width:51px;overflow:hidden;">WHM</div>
<div style="left:1317px;top:265px;width:53px;height:15px;background:#f0f0f0;border:1px solid #a5a5a5;box-sizing:border-box;"></div>
<div style="top:266.19px;font-size:11px;line-height:14px;left:1318px;color:#000;letter-spacing:-0.12px;width:51px;overflow:hidden;">INR</div>
<div style="left:1317px;top:284px;width:53px;height:15px;background:#f0f0f0;border:1px solid #a5a5a5;box-sizing:border-box;"></div>
<div style="top:285.19px;font-size:11px;line-height:14px;left:1318px;color:#000;letter-spacing:-0.12px;width:51px;overflow:hidden;">INR</div>
<div style="left:1418px;top:248px;width:91px;height:15px;background:#fff;border:1px solid #a5a5a5;box-sizing:border-box;"></div>
<div style="top:249.19px;font-size:11px;line-height:14px;left:1421px;color:#000;letter-spacing:-0.12px;width:68px;overflow:hidden;">Active</div>
<div style="left:1489px;top:248px;width:20px;height:15px;background:linear-gradient(#f6f6f6,#ececec 45%,#dcdcdc 50%,#d4d4d4);border:1px solid #6e6e6e;box-sizing:border-box;"></div>
<svg style="left:1494.5px;top:256px;" width="9" height="5" viewBox="0 0 9 5"><path d="M0 0.5 H9 L4.5 4.8 Z" fill="#000"/></svg>
<div style="top:268.19px;font-size:11px;line-height:14px;left:1421.0px;width:80px;text-align:center;text-decoration:underline;letter-spacing:-0.12px;">Trn Path</div>
<div style="left:1418px;top:284px;width:71px;height:15px;background:#f0f0f0;border:1px solid #a5a5a5;box-sizing:border-box;"></div>
<div style="top:285.19px;font-size:11px;line-height:14px;left:1419px;color:#0000ff;text-decoration:underline;letter-spacing:-0.12px;width:69px;overflow:hidden;">000585</div>
<div style="left:1490px;top:284px;width:19px;height:15px;background:linear-gradient(#fafafa,#dcdcdc);border:1px solid #8a8a8a;box-sizing:border-box;"></div>
<svg style="left:1493px;top:287px;" width="12" height="10" viewBox="0 0 12 10"><rect x="0" y="4" width="5.5" height="6" fill="#303030"/><rect x="6.5" y="4" width="5.5" height="6" fill="#303030"/><rect x="1" y="0.5" width="3.5" height="4" fill="#505050"/><rect x="7.5" y="0.5" width="3.5" height="4" fill="#505050"/><rect x="1" y="6" width="3.5" height="2" fill="#a0a0a0"/><rect x="7.5" y="6" width="3.5" height="2" fill="#a0a0a0"/></svg>
<div style="left:846px;top:304px;width:695px;height:198px;border:1px solid #000;box-sizing:border-box;"></div>
<div style="top:311.19px;font-size:11px;line-height:14px;left:820px;width:80px;text-align:right;letter-spacing:-0.12px;">From Date</div>
<div style="left:903px;top:309px;width:85px;height:15px;background:#fff;border:1px solid #a5a5a5;box-sizing:border-box;"></div>
<div style="top:310.19px;font-size:11px;line-height:14px;left:906px;color:#000;letter-spacing:-0.12px;width:63px;overflow:hidden;">01/01/1999</div>
<div style="left:969px;top:309px;width:19px;height:15px;background:linear-gradient(#f6f6f6,#ececec 45%,#dcdcdc 50%,#d4d4d4);border:1px solid #6e6e6e;box-sizing:border-box;"></div>
<svg style="left:974.0px;top:317px;" width="9" height="5" viewBox="0 0 9 5"><path d="M0 0.5 H9 L4.5 4.8 Z" fill="#000"/></svg>
<div style="top:327.19px;font-size:11px;line-height:14px;left:820px;width:80px;text-align:right;letter-spacing:-0.12px;">To Date</div>
<div style="left:903px;top:326px;width:85px;height:15px;background:#fff;border:1px solid #a5a5a5;box-sizing:border-box;"></div>
<div style="top:327.19px;font-size:11px;line-height:14px;left:906px;color:#000;letter-spacing:-0.12px;width:63px;overflow:hidden;">01/31/1999</div>
<div style="left:969px;top:326px;width:19px;height:15px;background:linear-gradient(#f6f6f6,#ececec 45%,#dcdcdc 50%,#d4d4d4);border:1px solid #6e6e6e;box-sizing:border-box;"></div>
<svg style="left:974.0px;top:334px;" width="9" height="5" viewBox="0 0 9 5"><path d="M0 0.5 H9 L4.5 4.8 Z" fill="#000"/></svg>
<div style="top:309.19px;font-size:11px;line-height:14px;left:995px;text-decoration:underline;letter-spacing:-0.12px;"># Days</div>
<div style="top:309.19px;font-size:11px;line-height:14px;left:1035px;text-decoration:underline;letter-spacing:-0.12px;white-space:pre;">Fuel % ------&gt; Dlvry </div>
<div style="top:309.19px;font-size:11px;line-height:14px;left:1187px;text-decoration:underline;letter-spacing:-0.12px;">Rcpt</div>
<div style="top:309.19px;font-size:11px;line-height:14px;left:1232px;text-decoration:underline;letter-spacing:-0.12px;">Dlvry</div>
<div style="left:996px;top:326px;width:33px;height:15px;background:#f0f0f0;border:1px solid #a5a5a5;box-sizing:border-box;"></div>
<div style="top:327.19px;font-size:11px;line-height:14px;left:996px;width:30px;text-align:right;color:#000;letter-spacing:-0.12px;">31</div>
<div style="left:1031px;top:326px;width:51px;height:15px;background:#fff;border:1px solid #a5a5a5;box-sizing:border-box;"></div>
<div style="top:327.19px;font-size:11px;line-height:14px;left:1031.0px;width:51px;text-align:center;color:#000;letter-spacing:-0.12px;">0.000</div>
<div style="left:1085px;top:326px;width:52px;height:15px;background:#f0f0f0;border:1px solid #a5a5a5;box-sizing:border-box;"></div>
<div style="top:327.19px;font-size:11px;line-height:14px;left:1085px;width:50px;text-align:right;color:#000;letter-spacing:-0.12px;">0</div>
<div style="top:328.19px;font-size:11px;line-height:14px;left:1145px;letter-spacing:-0.12px;">Fee:</div>
<div style="left:1171px;top:326px;width:47px;height:15px;background:#f0f0f0;border:1px solid #a5a5a5;box-sizing:border-box;"></div>
<div style="top:327.19px;font-size:11px;line-height:14px;left:1171px;width:45px;text-align:right;color:#000;letter-spacing:-0.12px;">.000000</div>
<div style="left:1221px;top:326px;width:48px;height:15px;background:#f0f0f0;border:1px solid #a5a5a5;box-sizing:border-box;"></div>
<div style="top:327.19px;font-size:11px;line-height:14px;left:1221px;width:46px;text-align:right;color:#000;letter-spacing:-0.12px;">.100000</div>
<div style="left:1274px;top:326px;width:89px;height:15px;background:#fff;border:1px solid #a5a5a5;box-sizing:border-box;"></div>
<div style="top:327.19px;font-size:11px;line-height:14px;left:1277px;color:#e00000;letter-spacing:-0.12px;width:67px;overflow:hidden;">US DOLLAR</div>
<div style="left:1344px;top:326px;width:19px;height:15px;background:linear-gradient(#f6f6f6,#ececec 45%,#dcdcdc 50%,#d4d4d4);border:1px solid #6e6e6e;box-sizing:border-box;"></div>
<svg style="left:1349.0px;top:334px;" width="9" height="5" viewBox="0 0 9 5"><path d="M0 0.5 H9 L4.5 4.8 Z" fill="#000"/></svg>
<div style="left:1369px;top:316px;width:25px;height:24px;background:#f4f4f4;border:1px solid #8a8a8a;border-radius:3px;box-sizing:border-box;"></div>
<div style="left:1371px;top:318px;width:20px;height:19px;background:#c6c6c6;border-top:1px solid #fff;border-left:1px solid #fff;border-right:2px solid #8a8a8a;border-bottom:2px solid #8a8a8a;box-sizing:border-box;"></div>
<div style="top:318.1px;font-size:17px;line-height:22px;left:1369.0px;width:24px;text-align:center;color:#f00000;font-weight:bold;font-family:"Liberation Serif", serif;font-style:italic;">S</div>
<div style="left:1381px;top:319px;width:1px;height:16px;background:#f00000;transform:skewX(-15deg);"></div>
<div style="left:1399px;top:311px;width:113px;height:32px;background:#fff;border:1px solid #8a8a8a;border-right:2px solid #8a8a8a;border-bottom:2px solid #8a8a8a;box-sizing:border-box;"></div>
<div style="top:313.19px;font-size:11px;line-height:14px;left:1399.0px;width:112px;text-align:center;color:#f00000;font-weight:bold;letter-spacing:0.3px;">Leg not set up</div>
<div style="top:327.19px;font-size:11px;line-height:14px;left:1399.0px;width:112px;text-align:center;color:#f00000;font-weight:bold;letter-spacing:0.1px;">under K Rate Sched</div>
<div style="top:346.19px;font-size:11px;line-height:14px;left:840px;width:60px;text-align:right;letter-spacing:-0.12px;">Fee</div>
<div style="left:903px;top:345px;width:151px;height:15px;background:#fff;border:1px solid #a5a5a5;box-sizing:border-box;"></div>
<div style="top:346.19px;font-size:11px;line-height:14px;left:906px;color:#000;letter-spacing:-0.12px;width:129px;overflow:hidden;">Manually Input</div>
<div style="left:1035px;top:345px;width:19px;height:15px;background:linear-gradient(#f6f6f6,#ececec 45%,#dcdcdc 50%,#d4d4d4);border:1px solid #6e6e6e;box-sizing:border-box;"></div>
<svg style="left:1040.0px;top:353px;" width="9" height="5" viewBox="0 0 9 5"><path d="M0 0.5 H9 L4.5 4.8 Z" fill="#000"/></svg>
<div style="top:365.19px;font-size:11px;line-height:14px;left:840px;width:60px;text-align:right;letter-spacing:-0.12px;">Fuel</div>
<div style="left:903px;top:364px;width:151px;height:15px;background:#fff;border:1px solid #a5a5a5;box-sizing:border-box;"></div>
<div style="top:365.19px;font-size:11px;line-height:14px;left:906px;color:#000;letter-spacing:-0.12px;width:129px;overflow:hidden;">Manually Input</div>
<div style="left:1035px;top:364px;width:19px;height:15px;background:linear-gradient(#f6f6f6,#ececec 45%,#dcdcdc 50%,#d4d4d4);border:1px solid #6e6e6e;box-sizing:border-box;"></div>
<svg style="left:1040.0px;top:372px;" width="9" height="5" viewBox="0 0 9 5"><path d="M0 0.5 H9 L4.5 4.8 Z" fill="#000"/></svg>
<div style="top:347.19px;font-size:11px;line-height:14px;left:1278px;width:60px;text-align:right;letter-spacing:-0.12px;">Units</div>
<div style="left:1342px;top:346px;width:63px;height:15px;background:#f0f0f0;border:1px solid #a5a5a5;box-sizing:border-box;"></div>
<div style="top:347.19px;font-size:11px;line-height:14px;left:1345px;color:#000;letter-spacing:-0.12px;width:41px;overflow:hidden;">mmbtu</div>
<div style="left:1386px;top:346px;width:19px;height:15px;background:linear-gradient(#f6f6f6,#ececec 45%,#dcdcdc 50%,#d4d4d4);border:1px solid #6e6e6e;box-sizing:border-box;"></div>
<svg style="left:1391.0px;top:354px;" width="9" height="5" viewBox="0 0 9 5"><path d="M0 0.5 H9 L4.5 4.8 Z" fill="#000"/></svg>
<div style="top:348.19px;font-size:11px;line-height:14px;left:1389px;width:60px;text-align:right;letter-spacing:-0.12px;">Cond</div>
<div style="left:1453px;top:346px;width:55px;height:15px;background:#f0f0f0;border:1px solid #a5a5a5;box-sizing:border-box;"></div>
<div style="top:347.19px;font-size:11px;line-height:14px;left:1456px;color:#000;letter-spacing:-0.12px;width:33px;overflow:hidden;">Dry</div>
<div style="left:1489px;top:346px;width:19px;height:15px;background:linear-gradient(#f6f6f6,#ececec 45%,#dcdcdc 50%,#d4d4d4);border:1px solid #6e6e6e;box-sizing:border-box;"></div>
<svg style="left:1494.0px;top:354px;" width="9" height="5" viewBox="0 0 9 5"><path d="M0 0.5 H9 L4.5 4.8 Z" fill="#000"/></svg>
<div style="top:382.19px;font-size:11px;line-height:14px;left:1257px;width:100px;text-align:right;color:#0000ff;letter-spacing:-0.12px;">Product Type</div>
<div style="left:1362px;top:381px;width:145px;height:15px;background:#fff;border:1px solid #a5a5a5;box-sizing:border-box;"></div>
<div style="top:382.19px;font-size:11px;line-height:14px;left:1365px;color:#000;letter-spacing:-0.12px;width:122px;overflow:hidden;">GAS</div>
<div style="left:1487px;top:381px;width:20px;height:15px;background:linear-gradient(#f6f6f6,#ececec 45%,#dcdcdc 50%,#d4d4d4);border:1px solid #6e6e6e;box-sizing:border-box;"></div>
<svg style="left:1492.5px;top:389px;" width="9" height="5" viewBox="0 0 9 5"><path d="M0 0.5 H9 L4.5 4.8 Z" fill="#000"/></svg>
<div style="left:885px;top:400px;width:13px;height:13px;background:linear-gradient(135deg,#d8d8d8,#fafafa);border:1px solid #8a8a8a;box-sizing:border-box;"></div>
<div style="top:400.19px;font-size:11px;line-height:14px;left:906px;letter-spacing:-0.12px;">Tax Remitter</div>
<div style="top:401.19px;font-size:11px;line-height:14px;left:1063px;width:60px;text-align:right;letter-spacing:-0.12px;">Book ID</div>
<div style="left:1127px;top:401px;width:145px;height:15px;background:#fff;border:1px solid #a5a5a5;box-sizing:border-box;"></div>
<div style="left:1253px;top:401px;width:19px;height:15px;background:linear-gradient(#f6f6f6,#ececec 45%,#dcdcdc 50%,#d4d4d4);border:1px solid #6e6e6e;box-sizing:border-box;"></div>
<svg style="left:1258.0px;top:409px;" width="9" height="5" viewBox="0 0 9 5"><path d="M0 0.5 H9 L4.5 4.8 Z" fill="#000"/></svg>
<div style="top:401.19px;font-size:11px;line-height:14px;left:1257px;width:100px;text-align:right;letter-spacing:-0.12px;">Level of Service</div>
<div style="left:1362px;top:400px;width:145px;height:16px;background:#fff;border:1px solid #a5a5a5;box-sizing:border-box;"></div>
<div style="left:1487px;top:400px;width:20px;height:16px;background:linear-gradient(#f6f6f6,#ececec 45%,#dcdcdc 50%,#d4d4d4);border:1px solid #6e6e6e;box-sizing:border-box;"></div>
<svg style="left:1492.5px;top:409px;" width="9" height="5" viewBox="0 0 9 5"><path d="M0 0.5 H9 L4.5 4.8 Z" fill="#000"/></svg>
<div style="top:420.19px;font-size:11px;line-height:14px;left:858.0px;width:90px;text-align:center;text-decoration:underline;letter-spacing:-0.12px;">Receipt Vol</div>
<div style="top:434.19px;font-size:11px;line-height:14px;left:858.0px;width:90px;text-align:center;text-decoration:underline;letter-spacing:-0.12px;">Day</div>
<div style="top:420.19px;font-size:11px;line-height:14px;left:915.0px;width:90px;text-align:center;text-decoration:underline;letter-spacing:-0.12px;">Fuel Vol</div>
<div style="top:434.19px;font-size:11px;line-height:14px;left:915.0px;width:90px;text-align:center;text-decoration:underline;letter-spacing:-0.12px;">Day</div>
<div style="top:420.19px;font-size:11px;line-height:14px;left:973.0px;width:90px;text-align:center;text-decoration:underline;letter-spacing:-0.12px;">Delivery Vol</div>
<div style="top:434.19px;font-size:11px;line-height:14px;left:973.0px;width:90px;text-align:center;text-decoration:underline;letter-spacing:-0.12px;">Day</div>
<div style="top:420.19px;font-size:11px;line-height:14px;left:1032.0px;width:90px;text-align:center;text-decoration:underline;letter-spacing:-0.12px;">Imbal Vol</div>
<div style="top:434.19px;font-size:11px;line-height:14px;left:1032.0px;width:90px;text-align:center;text-decoration:underline;letter-spacing:-0.12px;">Day</div>
<div style="top:420.19px;font-size:11px;line-height:14px;left:1088.0px;width:90px;text-align:center;text-decoration:underline;letter-spacing:-0.12px;">HV</div>
<div style="top:434.19px;font-size:11px;line-height:14px;left:1088.0px;width:90px;text-align:center;text-decoration:underline;letter-spacing:-0.12px;">Factor</div>
<div style="top:434.19px;font-size:11px;line-height:14px;left:1141.0px;width:90px;text-align:center;text-decoration:underline;letter-spacing:-0.12px;">Imbal/Mo</div>
<div style="top:420.19px;font-size:11px;line-height:14px;left:1203.0px;width:90px;text-align:center;text-decoration:underline;letter-spacing:-0.12px;">Receipt</div>
<div style="top:434.19px;font-size:11px;line-height:14px;left:1203.0px;width:90px;text-align:center;text-decoration:underline;letter-spacing:-0.12px;">Vol/Mo</div>
<div style="top:420.19px;font-size:11px;line-height:14px;left:1279.0px;width:90px;text-align:center;text-decoration:underline;letter-spacing:-0.12px;">Fuel</div>
<div style="top:434.19px;font-size:11px;line-height:14px;left:1279.0px;width:90px;text-align:center;text-decoration:underline;letter-spacing:-0.12px;">Vol/Mo</div>
<div style="top:420.19px;font-size:11px;line-height:14px;left:1346.0px;width:90px;text-align:center;text-decoration:underline;letter-spacing:-0.12px;">Delivery</div>
<div style="top:434.19px;font-size:11px;line-height:14px;left:1346.0px;width:90px;text-align:center;text-decoration:underline;letter-spacing:-0.12px;">Vol/Mo</div>
<div style="top:420.19px;font-size:11px;line-height:14px;left:1431.0px;width:90px;text-align:center;text-decoration:underline;letter-spacing:-0.12px;">Total</div>
<div style="top:434.19px;font-size:11px;line-height:14px;left:1431.0px;width:90px;text-align:center;text-decoration:underline;letter-spacing:-0.12px;">Value</div>
<div style="top:450.19px;font-size:11px;line-height:14px;left:830px;width:40px;text-align:right;letter-spacing:-0.12px;">Nom</div>
<div style="left:873px;top:450px;width:60px;height:15px;background:#f0f0f0;border:1px solid #a5a5a5;box-sizing:border-box;"></div>
<div style="top:451.19px;font-size:11px;line-height:14px;left:873px;width:59px;text-align:right;color:#000;letter-spacing:-0.12px;">365</div>
<div style="left:934px;top:450px;width:55px;height:15px;background:#fff;border:1px solid #a5a5a5;box-sizing:border-box;"></div>
<div style="top:451.19px;font-size:11px;line-height:14px;left:934px;width:54px;text-align:right;color:#000;letter-spacing:-0.12px;">0</div>
<div style="left:990px;top:450px;width:59px;height:15px;background:#fff;border:1px solid #a5a5a5;box-sizing:border-box;"></div>
<div style="top:451.19px;font-size:11px;line-height:14px;left:990px;width:58px;text-align:right;color:#000;letter-spacing:-0.12px;">365</div>
<div style="left:1106px;top:450px;width:54px;height:15px;background:#f0f0f0;border:1px solid #a5a5a5;box-sizing:border-box;"></div>
<div style="top:451.19px;font-size:11px;line-height:14px;left:1106px;width:53px;text-align:right;color:#000;letter-spacing:-0.12px;">1.0000</div>
<div style="left:1218px;top:450px;width:75px;height:15px;background:#f0f0f0;border:1px solid #a5a5a5;box-sizing:border-box;"></div>
<div style="top:451.19px;font-size:11px;line-height:14px;left:1218px;width:74px;text-align:right;color:#000;letter-spacing:-0.12px;">11,315</div>
<div style="left:1294px;top:450px;width:66px;height:15px;background:#f0f0f0;border:1px solid #a5a5a5;box-sizing:border-box;"></div>
<div style="top:451.19px;font-size:11px;line-height:14px;left:1294px;width:65px;text-align:right;color:#000;letter-spacing:-0.12px;">0</div>
<div style="left:1361px;top:450px;width:79px;height:15px;background:#f0f0f0;border:1px solid #a5a5a5;box-sizing:border-box;"></div>
<div style="top:451.19px;font-size:11px;line-height:14px;left:1361px;width:78px;text-align:right;color:#000;letter-spacing:-0.12px;">11,315</div>
<div style="left:1446px;top:450px;width:89px;height:15px;background:#f0f0f0;border:1px solid #a5a5a5;box-sizing:border-box;"></div>
<div style="top:451.19px;font-size:11px;line-height:14px;left:1446px;width:88px;text-align:right;color:#000;letter-spacing:-0.12px;">1,131.50</div>
<div style="top:467.19px;font-size:11px;line-height:14px;left:830px;width:40px;text-align:right;letter-spacing:-0.12px;">Conf</div>
<div style="left:873px;top:467px;width:60px;height:15px;background:#f0f0f0;border:1px solid #a5a5a5;box-sizing:border-box;"></div>
<div style="top:468.19px;font-size:11px;line-height:14px;left:873px;width:59px;text-align:right;color:#000;letter-spacing:-0.12px;">365</div>
<div style="left:934px;top:467px;width:55px;height:15px;background:#fff;border:1px solid #a5a5a5;box-sizing:border-box;"></div>
<div style="top:468.19px;font-size:11px;line-height:14px;left:934px;width:54px;text-align:right;color:#000;letter-spacing:-0.12px;">0</div>
<div style="left:990px;top:467px;width:59px;height:15px;background:#fff;border:1px solid #a5a5a5;box-sizing:border-box;"></div>
<div style="top:468.19px;font-size:11px;line-height:14px;left:990px;width:58px;text-align:right;color:#000;letter-spacing:-0.12px;">365</div>
<div style="left:1051px;top:467px;width:54px;height:15px;background:#f0f0f0;border:1px solid #a5a5a5;box-sizing:border-box;"></div>
<div style="top:468.19px;font-size:11px;line-height:14px;left:1051px;width:53px;text-align:right;color:#000;letter-spacing:-0.12px;">0.00</div>
<div style="left:1106px;top:467px;width:54px;height:15px;background:#f0f0f0;border:1px solid #a5a5a5;box-sizing:border-box;"></div>
<div style="top:468.19px;font-size:11px;line-height:14px;left:1106px;width:53px;text-align:right;color:#000;letter-spacing:-0.12px;">1.0000</div>
<div style="left:1162px;top:467px;width:55px;height:15px;background:#f0f0f0;border:1px solid #a5a5a5;box-sizing:border-box;"></div>
<div style="left:1218px;top:467px;width:75px;height:15px;background:#f0f0f0;border:1px solid #a5a5a5;box-sizing:border-box;"></div>
<div style="top:468.19px;font-size:11px;line-height:14px;left:1218px;width:74px;text-align:right;color:#000;letter-spacing:-0.12px;">11,315</div>
<div style="left:1294px;top:467px;width:66px;height:15px;background:#f0f0f0;border:1px solid #a5a5a5;box-sizing:border-box;"></div>
<div style="top:468.19px;font-size:11px;line-height:14px;left:1294px;width:65px;text-align:right;color:#000;letter-spacing:-0.12px;">0</div>
<div style="left:1361px;top:467px;width:79px;height:15px;background:#f0f0f0;border:1px solid #a5a5a5;box-sizing:border-box;"></div>
<div style="top:468.19px;font-size:11px;line-height:14px;left:1361px;width:78px;text-align:right;color:#000;letter-spacing:-0.12px;">11,315</div>
<div style="left:1446px;top:467px;width:89px;height:15px;background:#f0f0f0;border:1px solid #a5a5a5;box-sizing:border-box;"></div>
<div style="top:468.19px;font-size:11px;line-height:14px;left:1446px;width:88px;text-align:right;color:#000;letter-spacing:-0.12px;">1,131.50</div>
<div style="top:484.19px;font-size:11px;line-height:14px;left:830px;width:40px;text-align:right;letter-spacing:-0.12px;">Act</div>
<div style="left:873px;top:483px;width:60px;height:15px;background:#f0f0f0;border:1px solid #a5a5a5;box-sizing:border-box;"></div>
<div style="top:484.19px;font-size:11px;line-height:14px;left:873px;width:59px;text-align:right;color:#000;letter-spacing:-0.12px;">339</div>
<div style="left:934px;top:483px;width:55px;height:15px;background:#f0f0f0;border:1px solid #a5a5a5;box-sizing:border-box;"></div>
<div style="top:484.19px;font-size:11px;line-height:14px;left:934px;width:54px;text-align:right;color:#000;letter-spacing:-0.12px;">0</div>
<div style="left:990px;top:483px;width:59px;height:15px;background:#f0f0f0;border:1px solid #a5a5a5;box-sizing:border-box;"></div>
<div style="top:484.19px;font-size:11px;line-height:14px;left:990px;width:58px;text-align:right;color:#000;letter-spacing:-0.12px;">339</div>
<div style="left:1051px;top:483px;width:54px;height:15px;background:#f0f0f0;border:1px solid #a5a5a5;box-sizing:border-box;"></div>
<div style="top:484.19px;font-size:11px;line-height:14px;left:1051px;width:53px;text-align:right;color:#000;letter-spacing:-0.12px;">0</div>
<div style="left:1106px;top:483px;width:54px;height:15px;background:#f0f0f0;border:1px solid #a5a5a5;box-sizing:border-box;"></div>
<div style="top:484.19px;font-size:11px;line-height:14px;left:1106px;width:53px;text-align:right;color:#000;letter-spacing:-0.12px;">1.0000</div>
<div style="left:1162px;top:483px;width:55px;height:15px;background:#f0f0f0;border:1px solid #a5a5a5;box-sizing:border-box;"></div>
<div style="top:484.19px;font-size:11px;line-height:14px;left:1162px;width:54px;text-align:right;color:#000;letter-spacing:-0.12px;">0</div>
<div style="left:1218px;top:483px;width:75px;height:15px;background:#f0f0f0;border:1px solid #a5a5a5;box-sizing:border-box;"></div>
<div style="top:484.19px;font-size:11px;line-height:14px;left:1218px;width:74px;text-align:right;color:#000;letter-spacing:-0.12px;">10,535</div>
<div style="left:1294px;top:483px;width:66px;height:15px;background:#f0f0f0;border:1px solid #a5a5a5;box-sizing:border-box;"></div>
<div style="top:484.19px;font-size:11px;line-height:14px;left:1294px;width:65px;text-align:right;color:#000;letter-spacing:-0.12px;">0</div>
<div style="left:1361px;top:483px;width:79px;height:15px;background:#f0f0f0;border:1px solid #a5a5a5;box-sizing:border-box;"></div>
<div style="top:484.19px;font-size:11px;line-height:14px;left:1361px;width:78px;text-align:right;color:#000;letter-spacing:-0.12px;">10,535</div>
<div style="left:1446px;top:483px;width:89px;height:15px;background:#f0f0f0;border:1px solid #a5a5a5;box-sizing:border-box;"></div>
<div style="top:484.19px;font-size:11px;line-height:14px;left:1446px;width:88px;text-align:right;color:#000;letter-spacing:-0.12px;">1,053.50</div>
<svg style="left:1209px;top:462px;" width="13" height="20" viewBox="0 0 13 20"><path d="M1 1 V16 L4.5 12.5 L7 18 L9.5 17 L7 11.5 H12 Z" fill="#fff" stroke="#000"/></svg>
<div style="left:847px;top:503px;width:76px;height:17px;background:linear-gradient(#f6f6f6,#e6e6e6 50%,#d6d6d6);border:1px solid #707070;border-radius:2px;box-sizing:border-box;"></div>
<div style="top:505.19px;font-size:11px;line-height:14px;left:847.0px;width:76px;text-align:center;color:#000;letter-spacing:-0.12px;">Add Activity #</div>
<div style="left:924px;top:503px;width:53px;height:17px;background:#f4f4f4;border:1px solid #c8c8c8;border-radius:2px;box-sizing:border-box;"></div>
<div style="top:505.19px;font-size:11px;line-height:14px;left:920.0px;width:60px;text-align:center;color:#a0a0a0;letter-spacing:-0.12px;">Activity #</div>
<div style="left:978px;top:503px;width:106px;height:17px;background:linear-gradient(#f6f6f6,#e6e6e6 50%,#d6d6d6);border:1px solid #707070;border-radius:2px;box-sizing:border-box;"></div>
<div style="top:505.19px;font-size:11px;line-height:14px;left:978.0px;width:106px;text-align:center;color:#000;letter-spacing:-0.12px;">Create Path Template</div>
<div style="left:1138px;top:503px;width:31px;height:17px;background:linear-gradient(#f6f6f6,#e6e6e6 50%,#d6d6d6);border:1px solid #707070;border-radius:2px;box-sizing:border-box;"></div>
<div style="top:505.19px;font-size:11px;line-height:14px;left:1138.0px;width:31px;text-align:center;color:#000;letter-spacing:-0.12px;"></div>
<svg style="left:1142px;top:506px;" width="24" height="13" viewBox="0 0 24 13"><path d="M1 6 H23" stroke="#e0d000" stroke-width="2" stroke-dasharray="3 2"/><path d="M4 2 V11 M16 2 V11 M19 2 V11" stroke="#000" stroke-width="1.2"/><circle cx="10" cy="9" r="2" fill="#000"/></svg>
<div style="left:1171px;top:503px;width:84px;height:17px;background:linear-gradient(#f6f6f6,#e6e6e6 50%,#d6d6d6);border:1px solid #707070;border-radius:2px;box-sizing:border-box;"></div>
<div style="top:505.19px;font-size:11px;line-height:14px;left:1171.0px;width:84px;text-align:center;color:#000;letter-spacing:-0.12px;">Disconnect Buy</div>
<div style="left:843px;top:529px;width:741px;height:598px;border:1px solid #6a6a6a;border-left:2px solid #6a6a6a;box-sizing:border-box;"></div>
<div style="top:532.19px;font-size:11px;line-height:14px;left:836.0px;width:124px;text-align:center;letter-spacing:-0.12px;">Deal #</div>
<div style="left:847px;top:546px;width:103px;height:1px;background:#000;"></div>
<div style="top:532.19px;font-size:11px;line-height:14px;left:941.0px;width:68px;text-align:center;letter-spacing:-0.12px;">Path #</div>
<div style="left:952px;top:546px;width:47px;height:1px;background:#000;"></div>
<div style="left:951px;top:531px;width:1px;height:15px;background:#e0e0e0;"></div>
<div style="top:532.19px;font-size:11px;line-height:14px;left:990.0px;width:66px;text-align:center;letter-spacing:-0.12px;">Leg #</div>
<div style="left:1001px;top:546px;width:45px;height:1px;background:#000;"></div>
<div style="left:1000px;top:531px;width:1px;height:15px;background:#e0e0e0;"></div>
<div style="top:532.19px;font-size:11px;line-height:14px;left:1037.0px;width:46px;text-align:center;letter-spacing:-0.12px;">Rev</div>
<div style="left:1048px;top:546px;width:25px;height:1px;background:#000;"></div>
<div style="left:1047px;top:531px;width:1px;height:15px;background:#e0e0e0;"></div>
<div style="top:532.19px;font-size:11px;line-height:14px;left:1064.0px;width:76px;text-align:center;letter-spacing:-0.12px;">Contract #</div>
<div style="left:1075px;top:546px;width:55px;height:1px;background:#000;"></div>
<div style="left:1074px;top:531px;width:1px;height:15px;background:#e0e0e0;"></div>
<div style="top:532.19px;font-size:11px;line-height:14px;left:1121.0px;width:86px;text-align:center;letter-spacing:-0.12px;">Leg Status</div>
<div style="left:1132px;top:546px;width:65px;height:1px;background:#000;"></div>
<div style="left:1131px;top:531px;width:1px;height:15px;background:#e0e0e0;"></div>
<div style="top:532.19px;font-size:11px;line-height:14px;left:1188.0px;width:143px;text-align:center;letter-spacing:-0.12px;">Leg Facility</div>
<div style="left:1199px;top:546px;width:122px;height:1px;background:#000;"></div>
<div style="left:1198px;top:531px;width:1px;height:15px;background:#e0e0e0;"></div>
<div style="top:532.19px;font-size:11px;line-height:14px;left:1312.0px;width:119px;text-align:center;letter-spacing:-0.12px;">Rct Pt</div>
<div style="left:1323px;top:546px;width:98px;height:1px;background:#000;"></div>
<div style="left:1322px;top:531px;width:1px;height:15px;background:#e0e0e0;"></div>
<div style="top:532.19px;font-size:11px;line-height:14px;left:1412.0px;width:180px;text-align:center;letter-spacing:-0.12px;">Rct Pt Name</div>
<div style="left:1423px;top:546px;width:159px;height:1px;background:#000;"></div>
<div style="left:1422px;top:531px;width:1px;height:15px;background:#e0e0e0;"></div>
<div style="left:845px;top:549px;width:738px;height:15px;background:#3399ff;"></div>
<div style="top:549.19px;font-size:11px;line-height:14px;left:848px;color:#fff;letter-spacing:-0.12px;width:103px;overflow:hidden;">12311998-0022-00</div>
<div style="left:951px;top:549px;width:1px;height:16px;background:#fff;"></div>
<div style="top:549.19px;font-size:11px;line-height:14px;left:952px;color:#fff;letter-spacing:-0.12px;width:48px;overflow:hidden;">000585</div>
<div style="left:1000px;top:549px;width:1px;height:16px;background:#fff;"></div>
<div style="top:549.19px;font-size:11px;line-height:14px;left:1001px;color:#fff;letter-spacing:-0.12px;width:46px;overflow:hidden;">0001</div>
<div style="left:1047px;top:549px;width:1px;height:16px;background:#fff;"></div>
<div style="top:549.19px;font-size:11px;line-height:14px;left:1041.0px;width:40px;text-align:center;color:#fff;letter-spacing:-0.12px;">00</div>
<div style="left:1074px;top:549px;width:1px;height:16px;background:#fff;"></div>
<div style="top:549.19px;font-size:11px;line-height:14px;left:1075px;color:#fff;letter-spacing:-0.12px;width:56px;overflow:hidden;">TRN00017</div>
<div style="left:1131px;top:549px;width:1px;height:16px;background:#fff;"></div>
<div style="top:549.19px;font-size:11px;line-height:14px;left:1132px;color:#fff;letter-spacing:-0.12px;width:66px;overflow:hidden;">ACT</div>
<div style="left:1198px;top:549px;width:1px;height:16px;background:#fff;"></div>
<div style="top:549.19px;font-size:11px;line-height:14px;left:1199px;color:#fff;letter-spacing:-0.12px;width:123px;overflow:hidden;">Comstock Oil &amp; Gas Cros</div>
<div style="left:1322px;top:549px;width:1px;height:16px;background:#fff;"></div>
<div style="top:549.19px;font-size:11px;line-height:14px;left:1323px;color:#fff;letter-spacing:-0.12px;width:99px;overflow:hidden;">COGFAULCONERTIE</div>
<div style="left:1422px;top:549px;width:1px;height:16px;background:#fff;"></div>
<div style="top:549.19px;font-size:11px;line-height:14px;left:1423px;color:#fff;letter-spacing:-0.12px;width:160px;overflow:hidden;">HUGGS</div>
<div style="top:565.19px;font-size:11px;line-height:14px;left:848px;color:#000;letter-spacing:-0.12px;width:103px;overflow:hidden;">12311998-0022-00</div>
<div style="left:951px;top:565px;width:1px;height:16px;background:#e8e8e8;"></div>
<div style="top:565.19px;font-size:11px;line-height:14px;left:952px;color:#000;letter-spacing:-0.12px;width:48px;overflow:hidden;">000585</div>
<div style="left:1000px;top:565px;width:1px;height:16px;background:#e8e8e8;"></div>
<div style="top:565.19px;font-size:11px;line-height:14px;left:1001px;color:#000;letter-spacing:-0.12px;width:46px;overflow:hidden;">0002</div>
<div style="left:1047px;top:565px;width:1px;height:16px;background:#e8e8e8;"></div>
<div style="top:565.19px;font-size:11px;line-height:14px;left:1041.0px;width:40px;text-align:center;color:#000;letter-spacing:-0.12px;">00</div>
<div style="left:1074px;top:565px;width:1px;height:16px;background:#e8e8e8;"></div>
<div style="top:565.19px;font-size:11px;line-height:14px;left:1075px;color:#000;letter-spacing:-0.12px;width:56px;overflow:hidden;">TRN00015</div>
<div style="left:1131px;top:565px;width:1px;height:16px;background:#e8e8e8;"></div>
<div style="top:565.19px;font-size:11px;line-height:14px;left:1132px;color:#000;letter-spacing:-0.12px;width:66px;overflow:hidden;">ACT</div>
<div style="left:1198px;top:565px;width:1px;height:16px;background:#e8e8e8;"></div>
<div style="top:565.19px;font-size:11px;line-height:14px;left:1199px;color:#000;letter-spacing:-0.12px;width:123px;overflow:hidden;">Crosstex Pipeline Compar</div>
<div style="left:1322px;top:565px;width:1px;height:16px;background:#e8e8e8;"></div>
<div style="top:565.19px;font-size:11px;line-height:14px;left:1323px;color:#000;letter-spacing:-0.12px;width:99px;overflow:hidden;">Faulconer100-103</div>
<div style="left:1422px;top:565px;width:1px;height:16px;background:#e8e8e8;"></div>
<div style="top:565.19px;font-size:11px;line-height:14px;left:1423px;color:#000;letter-spacing:-0.12px;width:160px;overflow:hidden;">FAULCONER100-103</div>
<div style="left:845px;top:580px;width:738px;height:16px;background:#f4f4f4;"></div>
<div style="top:581.19px;font-size:11px;line-height:14px;left:848px;color:#000;letter-spacing:-0.12px;width:103px;overflow:hidden;">12311998-0022-00</div>
<div style="left:951px;top:581px;width:1px;height:16px;background:#e8e8e8;"></div>
<div style="top:581.19px;font-size:11px;line-height:14px;left:952px;color:#000;letter-spacing:-0.12px;width:48px;overflow:hidden;">000585</div>
<div style="left:1000px;top:581px;width:1px;height:16px;background:#e8e8e8;"></div>
<div style="top:581.19px;font-size:11px;line-height:14px;left:1001px;color:#000;letter-spacing:-0.12px;width:46px;overflow:hidden;">0003</div>
<div style="left:1047px;top:581px;width:1px;height:16px;background:#e8e8e8;"></div>
<div style="top:581.19px;font-size:11px;line-height:14px;left:1041.0px;width:40px;text-align:center;color:#000;letter-spacing:-0.12px;">00</div>
<div style="left:1074px;top:581px;width:1px;height:16px;background:#e8e8e8;"></div>
<div style="top:581.19px;font-size:11px;line-height:14px;left:1075px;color:#000;letter-spacing:-0.12px;width:56px;overflow:hidden;">TRN00001</div>
<div style="left:1131px;top:581px;width:1px;height:16px;background:#e8e8e8;"></div>
<div style="top:581.19px;font-size:11px;line-height:14px;left:1132px;color:#000;letter-spacing:-0.12px;width:66px;overflow:hidden;">ACT</div>
<div style="left:1198px;top:581px;width:1px;height:16px;background:#e8e8e8;"></div>
<div style="top:581.19px;font-size:11px;line-height:14px;left:1199px;color:#000;letter-spacing:-0.12px;width:123px;overflow:hidden;">Texas Eastern Transmiss</div>
<div style="left:1322px;top:581px;width:1px;height:16px;background:#e8e8e8;"></div>
<div style="top:581.19px;font-size:11px;line-height:14px;left:1323px;color:#000;letter-spacing:-0.12px;width:99px;overflow:hidden;">72488</div>
<div style="left:1422px;top:581px;width:1px;height:16px;background:#e8e8e8;"></div>
<div style="top:581.19px;font-size:11px;line-height:14px;left:1423px;color:#000;letter-spacing:-0.12px;width:160px;overflow:hidden;">CROSSTEX INTERCONNECT</div>
<div style="left:845px;top:1110px;width:738px;height:16px;background:#ececec;"></div>
<div style="left:845px;top:1109px;width:10px;height:17px;background:#6a6a6a;"></div>
<svg style="left:860px;top:1114px;" width="6" height="9" viewBox="0 0 6 9"><path d="M5 0.5 V8.5 L0.5 4.5 Z" fill="#303030"/></svg>
<div style="left:873px;top:1110px;width:131px;height:15px;background:linear-gradient(#f8f8f8,#e8e8e8 45%,#d4d4d4 55%,#e0e0e0);border:1px solid #9a9a9a;border-radius:3px;box-sizing:border-box;"></div>
<svg style="left:934px;top:1113px;" width="9" height="8" viewBox="0 0 9 8"><path d="M1.5 0 V8 M4.5 0 V8 M7.5 0 V8" stroke="#505050"/></svg>
<svg style="left:1572px;top:1114px;" width="6" height="9" viewBox="0 0 6 9"><path d="M0.5 0.5 V8.5 L5 4.5 Z" fill="#303030"/></svg>
<svg style="left:1398px;top:262px;" width="128" height="60" viewBox="0 0 128 60"><ellipse cx="64" cy="29.3" rx="59" ry="24.3" fill="none" stroke="#000" stroke-width="4.2"/></svg>
</body></html>
